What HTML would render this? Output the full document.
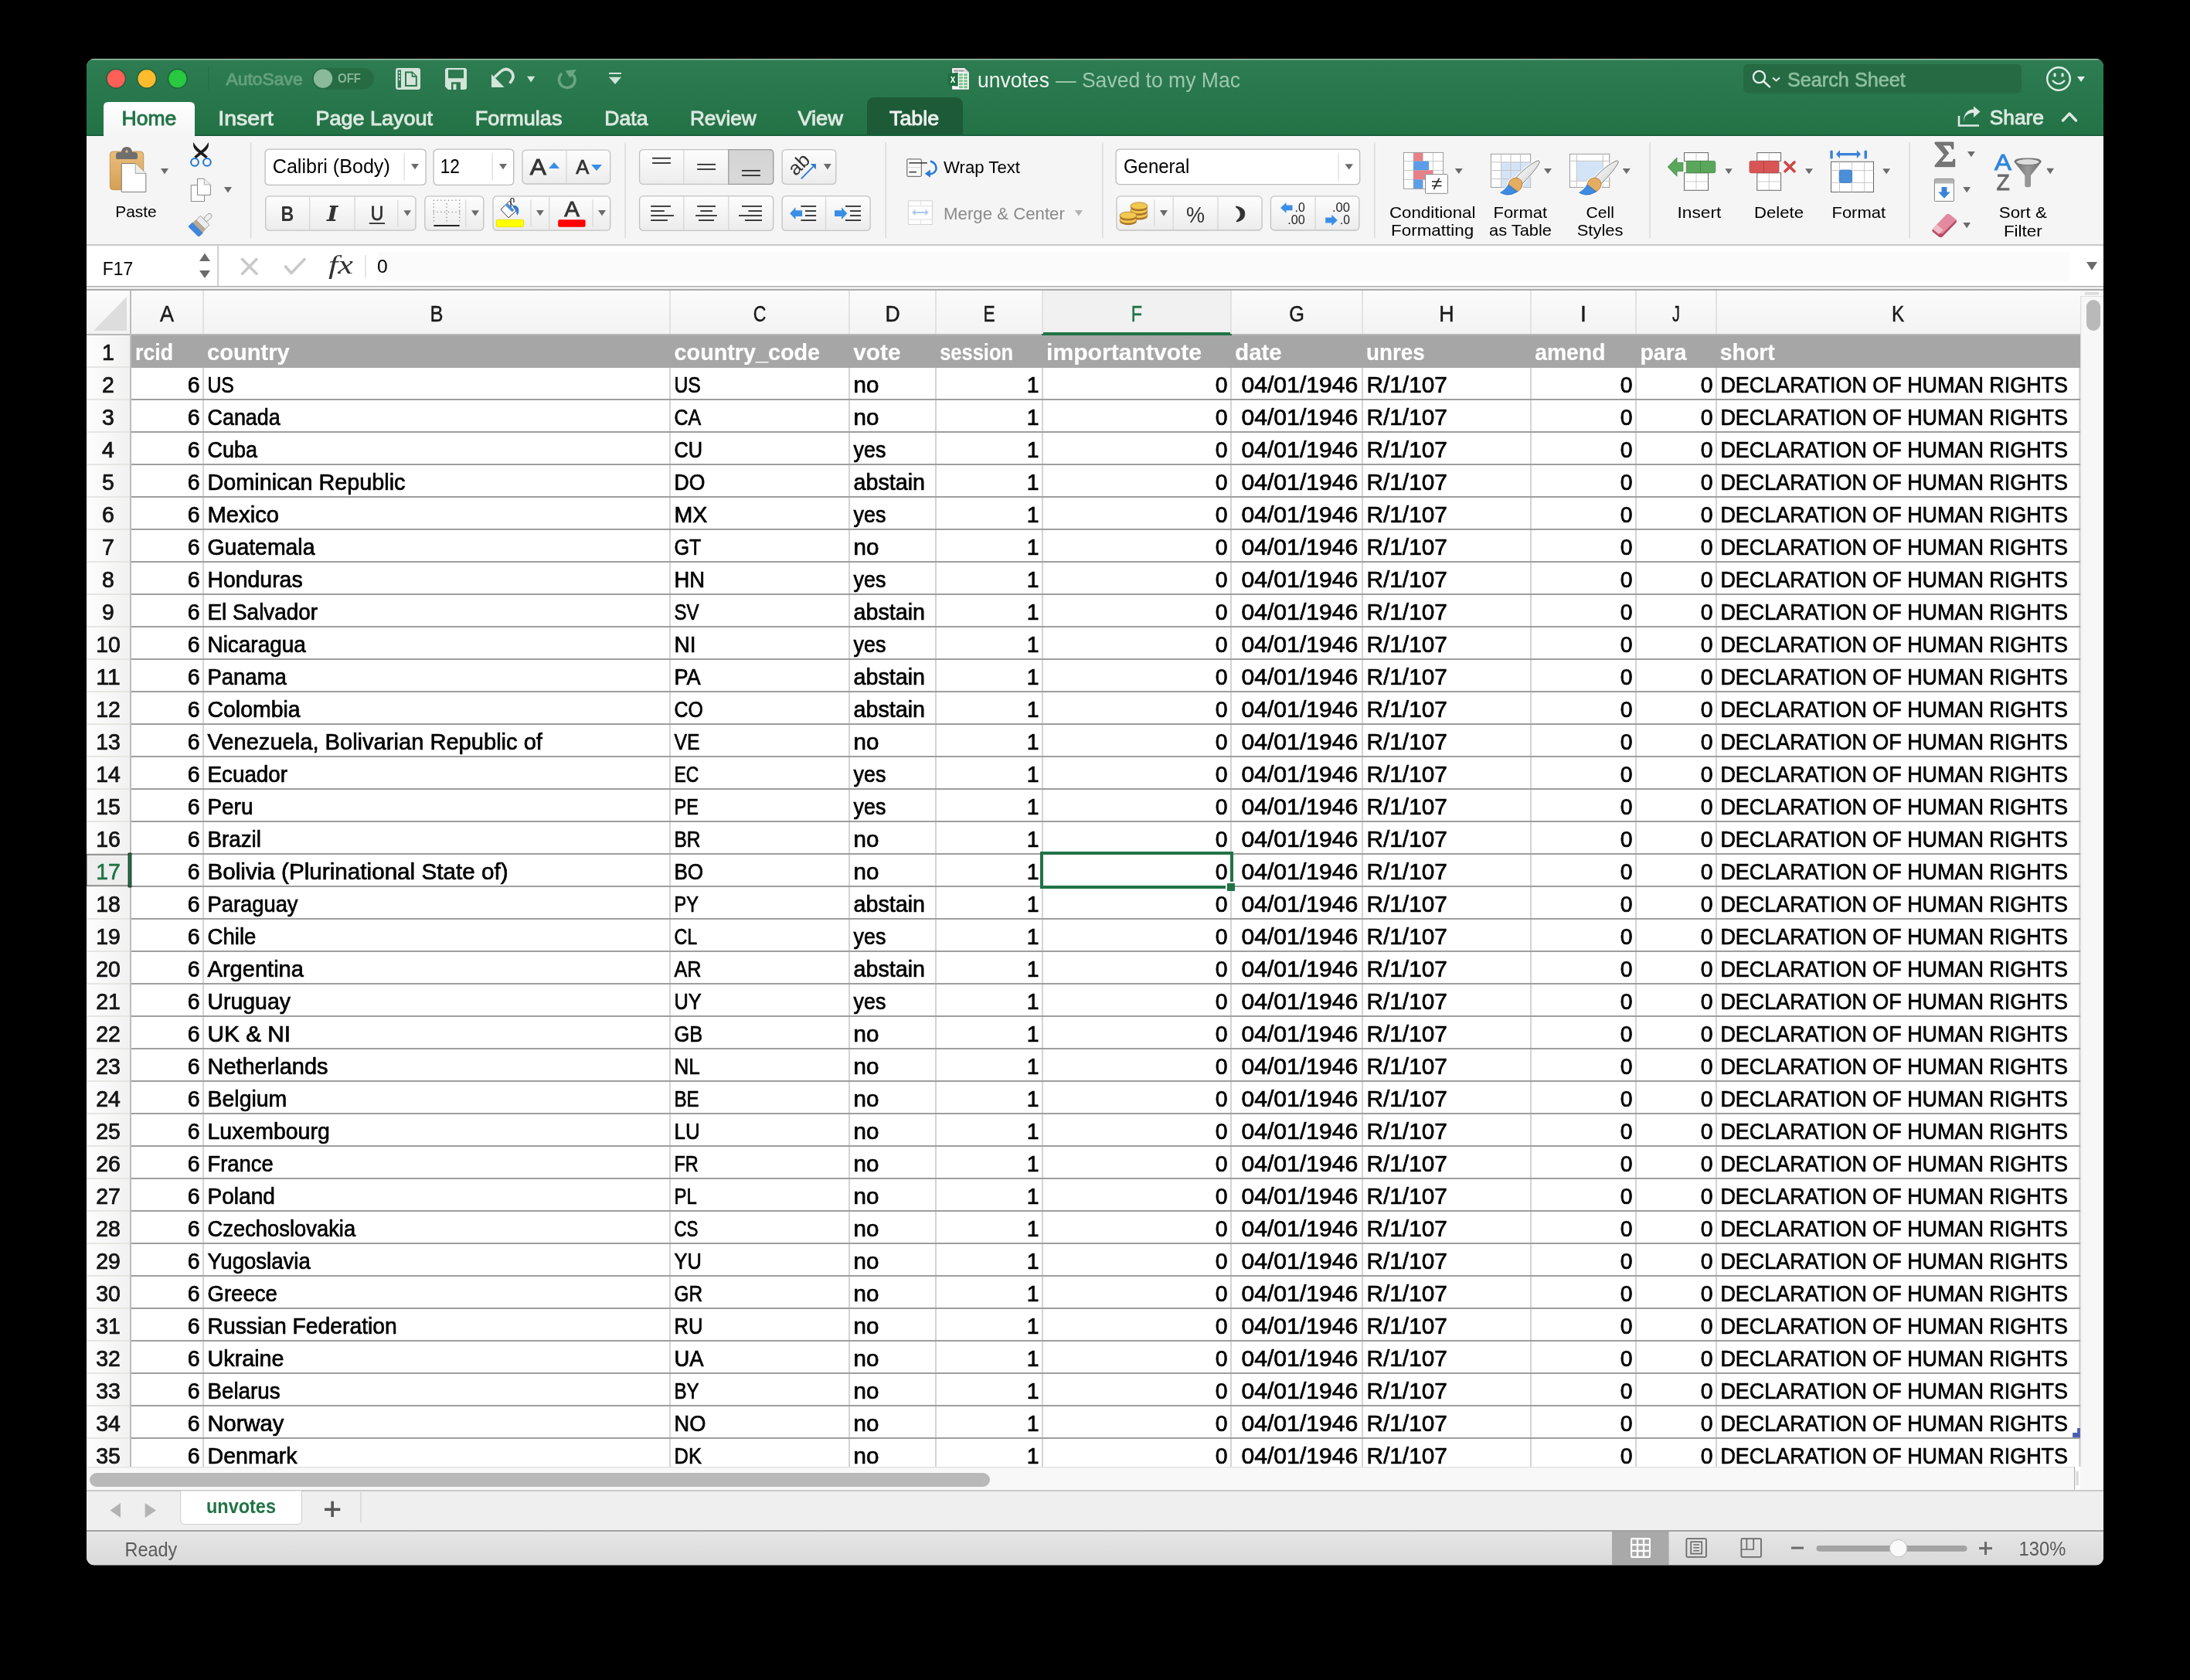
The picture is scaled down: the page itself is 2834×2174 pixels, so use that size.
<!DOCTYPE html>
<html><head><meta charset="utf-8"><style>
html,body{margin:0;padding:0;background:#000;}
body{width:2834px;height:2174px;overflow:hidden;position:relative;}
svg{position:absolute;left:0;top:0;will-change:transform;}
text{font-family:"Liberation Sans",sans-serif;}
</style></head><body>
<svg width="2834" height="2174" viewBox="0 0 2834 2174">
<defs>
<clipPath id="win"><rect x="112" y="76" width="2610" height="1949.5" rx="10" ry="10"/></clipPath>
<linearGradient id="gTitle" x1="0" y1="0" x2="0" y2="1"><stop offset="0" stop-color="#2e7c52"/><stop offset="1" stop-color="#237246"/></linearGradient>
<linearGradient id="gStatus" x1="0" y1="0" x2="0" y2="1"><stop offset="0" stop-color="#e6e6e6"/><stop offset="1" stop-color="#d9d9d9"/></linearGradient>
<linearGradient id="gBtn" x1="0" y1="0" x2="0" y2="1"><stop offset="0" stop-color="#fdfdfd"/><stop offset="1" stop-color="#ececec"/></linearGradient>
<linearGradient id="gBtnSel" x1="0" y1="0" x2="0" y2="1"><stop offset="0" stop-color="#dcdcdc"/><stop offset="1" stop-color="#d0d0d0"/></linearGradient>
<linearGradient id="gColHdr" x1="0" y1="0" x2="0" y2="1"><stop offset="0" stop-color="#fbfbfb"/><stop offset="1" stop-color="#f3f3f3"/></linearGradient>
<linearGradient id="gHome" x1="0" y1="0" x2="0" y2="1"><stop offset="0" stop-color="#ffffff"/><stop offset="1" stop-color="#f5f5f5"/></linearGradient>
<linearGradient id="gRowHdr" x1="0" y1="0" x2="1" y2="0"><stop offset="0" stop-color="#fdfdfd"/><stop offset="1" stop-color="#f1f1f1"/></linearGradient>
</defs>
<g clip-path="url(#win)">
<rect x="112" y="76" width="2610" height="1949.5" fill="#f5f5f5"/>
<rect x="112" y="76" width="2610" height="100" fill="url(#gTitle)"/>
<rect x="112" y="76" width="2610" height="1.5" fill="#9fc2ad"/>
<rect x="112" y="174" width="2610" height="2" fill="#17603a"/>
<rect x="112" y="176" width="2610" height="140" fill="#f5f5f5"/>
<rect x="112" y="316" width="2610" height="2" fill="#c9c9c9"/>
<rect x="112" y="318" width="2610" height="52" fill="#ffffff"/>
<rect x="112" y="370" width="2610" height="1.5" fill="#a9a9a9"/>
<rect x="112" y="371.5" width="2610" height="2.5" fill="#f0f0f0"/>
<rect x="112" y="374" width="2610" height="2" fill="#ababab"/>
<rect x="112" y="376" width="2580" height="56" fill="url(#gColHdr)"/>
<rect x="1350" y="376" width="242" height="56" fill="#f1f1f1"/>
<rect x="112" y="432" width="2580" height="2" fill="#b8b8b8"/>
<rect x="1348" y="430" width="246" height="4" fill="#217346"/>
<rect x="262" y="376" width="2" height="56" fill="#e2e2e2"/>
<rect x="866" y="376" width="2" height="56" fill="#e2e2e2"/>
<rect x="1098" y="376" width="2" height="56" fill="#e2e2e2"/>
<rect x="1210" y="376" width="2" height="56" fill="#e2e2e2"/>
<rect x="1348" y="376" width="2" height="56" fill="#e2e2e2"/>
<rect x="1592" y="376" width="2" height="56" fill="#e2e2e2"/>
<rect x="1762" y="376" width="2" height="56" fill="#e2e2e2"/>
<rect x="1980" y="376" width="2" height="56" fill="#e2e2e2"/>
<rect x="2116" y="376" width="2" height="56" fill="#e2e2e2"/>
<rect x="2220" y="376" width="2" height="56" fill="#e2e2e2"/>
<rect x="168" y="376" width="2" height="58" fill="#bdbdbd"/>
<polygon points="121,428 164,384 164,428" fill="#dddddd"/>
<text x="206.93" y="416.00" font-size="29" fill="#1a1a1a" textLength="18.05" lengthAdjust="spacingAndGlyphs" stroke="#1a1a1a" stroke-width="0.45">A</text>
<text x="556.54" y="416.00" font-size="29" fill="#1a1a1a" textLength="16.97" lengthAdjust="spacingAndGlyphs" stroke="#1a1a1a" stroke-width="0.45">B</text>
<text x="974.71" y="416.00" font-size="29" fill="#1a1a1a" textLength="16.64" lengthAdjust="spacingAndGlyphs" stroke="#1a1a1a" stroke-width="0.45">C</text>
<text x="1145.43" y="416.00" font-size="29" fill="#1a1a1a" textLength="19.20" lengthAdjust="spacingAndGlyphs" stroke="#1a1a1a" stroke-width="0.45">D</text>
<text x="1272.41" y="416.00" font-size="29" fill="#1a1a1a" textLength="15.23" lengthAdjust="spacingAndGlyphs" stroke="#1a1a1a" stroke-width="0.45">E</text>
<text x="1463.84" y="416.00" font-size="29" fill="#217346" textLength="14.34" lengthAdjust="spacingAndGlyphs" stroke="#217346" stroke-width="0.45">F</text>
<text x="1668.13" y="416.00" font-size="29" fill="#1a1a1a" textLength="19.68" lengthAdjust="spacingAndGlyphs" stroke="#1a1a1a" stroke-width="0.45">G</text>
<text x="1862.31" y="416.00" font-size="29" fill="#1a1a1a" textLength="19.44" lengthAdjust="spacingAndGlyphs" stroke="#1a1a1a" stroke-width="0.45">H</text>
<text x="2045.04" y="416.00" font-size="29" fill="#1a1a1a" textLength="7.86" lengthAdjust="spacingAndGlyphs" stroke="#1a1a1a" stroke-width="0.45">I</text>
<text x="2164.03" y="416.00" font-size="29" fill="#1a1a1a" textLength="9.95" lengthAdjust="spacingAndGlyphs" stroke="#1a1a1a" stroke-width="0.45">J</text>
<text x="2447.92" y="416.00" font-size="29" fill="#1a1a1a" textLength="16.21" lengthAdjust="spacingAndGlyphs" stroke="#1a1a1a" stroke-width="0.45">K</text>
<rect x="170" y="434" width="2522" height="1464" fill="#ffffff"/>
<rect x="112" y="434" width="56" height="1464" fill="url(#gRowHdr)"/>
<rect x="168" y="434" width="2" height="1464" fill="#bdbdbd"/>
<rect x="170" y="434" width="2522" height="42" fill="#a6a6a6"/>
<rect x="262" y="476" width="2" height="1422" fill="#d4d4d4"/>
<rect x="866" y="476" width="2" height="1422" fill="#d4d4d4"/>
<rect x="1098" y="476" width="2" height="1422" fill="#d4d4d4"/>
<rect x="1210" y="476" width="2" height="1422" fill="#d4d4d4"/>
<rect x="1348" y="476" width="2" height="1422" fill="#d4d4d4"/>
<rect x="1592" y="476" width="2" height="1422" fill="#d4d4d4"/>
<rect x="1762" y="476" width="2" height="1422" fill="#d4d4d4"/>
<rect x="1980" y="476" width="2" height="1422" fill="#d4d4d4"/>
<rect x="2116" y="476" width="2" height="1422" fill="#d4d4d4"/>
<rect x="2220" y="476" width="2" height="1422" fill="#d4d4d4"/>
<rect x="2690" y="476" width="2" height="1422" fill="#d4d4d4"/>
<rect x="170" y="516" width="2522" height="2" fill="#9e9e9e"/>
<rect x="170" y="558" width="2522" height="2" fill="#9e9e9e"/>
<rect x="170" y="600" width="2522" height="2" fill="#9e9e9e"/>
<rect x="170" y="642" width="2522" height="2" fill="#9e9e9e"/>
<rect x="170" y="684" width="2522" height="2" fill="#9e9e9e"/>
<rect x="170" y="726" width="2522" height="2" fill="#9e9e9e"/>
<rect x="170" y="768" width="2522" height="2" fill="#9e9e9e"/>
<rect x="170" y="810" width="2522" height="2" fill="#9e9e9e"/>
<rect x="170" y="852" width="2522" height="2" fill="#9e9e9e"/>
<rect x="170" y="894" width="2522" height="2" fill="#9e9e9e"/>
<rect x="170" y="936" width="2522" height="2" fill="#9e9e9e"/>
<rect x="170" y="978" width="2522" height="2" fill="#9e9e9e"/>
<rect x="170" y="1020" width="2522" height="2" fill="#9e9e9e"/>
<rect x="170" y="1062" width="2522" height="2" fill="#9e9e9e"/>
<rect x="170" y="1104" width="2522" height="2" fill="#9e9e9e"/>
<rect x="170" y="1146" width="2522" height="2" fill="#9e9e9e"/>
<rect x="170" y="1188" width="2522" height="2" fill="#9e9e9e"/>
<rect x="170" y="1230" width="2522" height="2" fill="#9e9e9e"/>
<rect x="170" y="1272" width="2522" height="2" fill="#9e9e9e"/>
<rect x="170" y="1314" width="2522" height="2" fill="#9e9e9e"/>
<rect x="170" y="1356" width="2522" height="2" fill="#9e9e9e"/>
<rect x="170" y="1398" width="2522" height="2" fill="#9e9e9e"/>
<rect x="170" y="1440" width="2522" height="2" fill="#9e9e9e"/>
<rect x="170" y="1482" width="2522" height="2" fill="#9e9e9e"/>
<rect x="170" y="1524" width="2522" height="2" fill="#9e9e9e"/>
<rect x="170" y="1566" width="2522" height="2" fill="#9e9e9e"/>
<rect x="170" y="1608" width="2522" height="2" fill="#9e9e9e"/>
<rect x="170" y="1650" width="2522" height="2" fill="#9e9e9e"/>
<rect x="170" y="1692" width="2522" height="2" fill="#9e9e9e"/>
<rect x="170" y="1734" width="2522" height="2" fill="#9e9e9e"/>
<rect x="170" y="1776" width="2522" height="2" fill="#9e9e9e"/>
<rect x="170" y="1818" width="2522" height="2" fill="#9e9e9e"/>
<rect x="170" y="1860" width="2522" height="2" fill="#9e9e9e"/>
<rect x="170" y="1902" width="2522" height="2" fill="#9e9e9e"/>
<rect x="112" y="474" width="56" height="2" fill="#e6e5e2"/>
<rect x="112" y="516" width="56" height="2" fill="#e6e5e2"/>
<rect x="112" y="558" width="56" height="2" fill="#e6e5e2"/>
<rect x="112" y="600" width="56" height="2" fill="#e6e5e2"/>
<rect x="112" y="642" width="56" height="2" fill="#e6e5e2"/>
<rect x="112" y="684" width="56" height="2" fill="#e6e5e2"/>
<rect x="112" y="726" width="56" height="2" fill="#e6e5e2"/>
<rect x="112" y="768" width="56" height="2" fill="#e6e5e2"/>
<rect x="112" y="810" width="56" height="2" fill="#e6e5e2"/>
<rect x="112" y="852" width="56" height="2" fill="#e6e5e2"/>
<rect x="112" y="894" width="56" height="2" fill="#e6e5e2"/>
<rect x="112" y="936" width="56" height="2" fill="#e6e5e2"/>
<rect x="112" y="978" width="56" height="2" fill="#e6e5e2"/>
<rect x="112" y="1020" width="56" height="2" fill="#e6e5e2"/>
<rect x="112" y="1062" width="56" height="2" fill="#e6e5e2"/>
<rect x="112" y="1104" width="56" height="2" fill="#e6e5e2"/>
<rect x="112" y="1146" width="56" height="2" fill="#e6e5e2"/>
<rect x="112" y="1188" width="56" height="2" fill="#e6e5e2"/>
<rect x="112" y="1230" width="56" height="2" fill="#e6e5e2"/>
<rect x="112" y="1272" width="56" height="2" fill="#e6e5e2"/>
<rect x="112" y="1314" width="56" height="2" fill="#e6e5e2"/>
<rect x="112" y="1356" width="56" height="2" fill="#e6e5e2"/>
<rect x="112" y="1398" width="56" height="2" fill="#e6e5e2"/>
<rect x="112" y="1440" width="56" height="2" fill="#e6e5e2"/>
<rect x="112" y="1482" width="56" height="2" fill="#e6e5e2"/>
<rect x="112" y="1524" width="56" height="2" fill="#e6e5e2"/>
<rect x="112" y="1566" width="56" height="2" fill="#e6e5e2"/>
<rect x="112" y="1608" width="56" height="2" fill="#e6e5e2"/>
<rect x="112" y="1650" width="56" height="2" fill="#e6e5e2"/>
<rect x="112" y="1692" width="56" height="2" fill="#e6e5e2"/>
<rect x="112" y="1734" width="56" height="2" fill="#e6e5e2"/>
<rect x="112" y="1776" width="56" height="2" fill="#e6e5e2"/>
<rect x="112" y="1818" width="56" height="2" fill="#e6e5e2"/>
<rect x="112" y="1860" width="56" height="2" fill="#e6e5e2"/>
<rect x="112" y="1902" width="56" height="2" fill="#e6e5e2"/>
<g font-family="Liberation Sans" stroke="#000" stroke-width="0.7">
<text x="175.10" y="466.00" font-size="29" font-weight="bold" fill="#ffffff" textLength="48.97" lengthAdjust="spacingAndGlyphs" stroke="#fff" stroke-width="0.2">rcid</text>
<text x="268.00" y="466.00" font-size="29" font-weight="bold" fill="#ffffff" textLength="106.76" lengthAdjust="spacingAndGlyphs" stroke="#fff" stroke-width="0.2">country</text>
<text x="872.60" y="466.00" font-size="29" font-weight="bold" fill="#ffffff" textLength="188.47" lengthAdjust="spacingAndGlyphs" stroke="#fff" stroke-width="0.2">country_code</text>
<text x="1104.30" y="466.00" font-size="29" font-weight="bold" fill="#ffffff" textLength="61.24" lengthAdjust="spacingAndGlyphs" stroke="#fff" stroke-width="0.2">vote</text>
<text x="1216.20" y="466.00" font-size="29" font-weight="bold" fill="#ffffff" textLength="94.78" lengthAdjust="spacingAndGlyphs" stroke="#fff" stroke-width="0.2">session</text>
<text x="1354.00" y="466.00" font-size="29" font-weight="bold" fill="#ffffff" textLength="201.07" lengthAdjust="spacingAndGlyphs" stroke="#fff" stroke-width="0.2">importantvote</text>
<text x="1598.30" y="466.00" font-size="29" font-weight="bold" fill="#ffffff" textLength="60.24" lengthAdjust="spacingAndGlyphs" stroke="#fff" stroke-width="0.2">date</text>
<text x="1768.00" y="466.00" font-size="29" font-weight="bold" fill="#ffffff" textLength="75.65" lengthAdjust="spacingAndGlyphs" stroke="#fff" stroke-width="0.2">unres</text>
<text x="1986.20" y="466.00" font-size="29" font-weight="bold" fill="#ffffff" textLength="91.25" lengthAdjust="spacingAndGlyphs" stroke="#fff" stroke-width="0.2">amend</text>
<text x="2122.50" y="466.00" font-size="29" font-weight="bold" fill="#ffffff" textLength="59.98" lengthAdjust="spacingAndGlyphs" stroke="#fff" stroke-width="0.2">para</text>
<text x="2225.80" y="466.00" font-size="29" font-weight="bold" fill="#ffffff" textLength="70.90" lengthAdjust="spacingAndGlyphs" stroke="#fff" stroke-width="0.2">short</text>
<text x="242.69" y="508" font-size="29" fill="#000" textLength="15.81" lengthAdjust="spacingAndGlyphs">6</text>
<text x="268.50" y="508.00" font-size="29" fill="#000" textLength="34.35" lengthAdjust="spacingAndGlyphs">US</text>
<text x="872.50" y="508.00" font-size="29" fill="#000" textLength="34.35" lengthAdjust="spacingAndGlyphs">US</text>
<text x="1104.50" y="508.00" font-size="29" fill="#000" textLength="32.85" lengthAdjust="spacingAndGlyphs">no</text>
<text x="1328.69" y="508" font-size="29" fill="#000" textLength="15.81" lengthAdjust="spacingAndGlyphs">1</text>
<text x="1572.69" y="508" font-size="29" fill="#000" textLength="15.81" lengthAdjust="spacingAndGlyphs">0</text>
<text x="1606.40" y="508.00" font-size="29" fill="#000" textLength="151.00" lengthAdjust="spacingAndGlyphs">04/01/1946</text>
<text x="1768.50" y="508.00" font-size="29" fill="#000" textLength="104.36" lengthAdjust="spacingAndGlyphs">R/1/107</text>
<text x="2096.69" y="508" font-size="29" fill="#000" textLength="15.81" lengthAdjust="spacingAndGlyphs">0</text>
<text x="2200.69" y="508" font-size="29" fill="#000" textLength="15.81" lengthAdjust="spacingAndGlyphs">0</text>
<text x="2226.40" y="508.00" font-size="29" fill="#000" textLength="449.60" lengthAdjust="spacingAndGlyphs">DECLARATION OF HUMAN RIGHTS</text>
<text x="242.69" y="550" font-size="29" fill="#000" textLength="15.81" lengthAdjust="spacingAndGlyphs">6</text>
<text x="268.50" y="550.00" font-size="29" fill="#000" textLength="94.26" lengthAdjust="spacingAndGlyphs">Canada</text>
<text x="872.50" y="550.00" font-size="29" fill="#000" textLength="34.69" lengthAdjust="spacingAndGlyphs">CA</text>
<text x="1104.50" y="550.00" font-size="29" fill="#000" textLength="32.85" lengthAdjust="spacingAndGlyphs">no</text>
<text x="1328.69" y="550" font-size="29" fill="#000" textLength="15.81" lengthAdjust="spacingAndGlyphs">1</text>
<text x="1572.69" y="550" font-size="29" fill="#000" textLength="15.81" lengthAdjust="spacingAndGlyphs">0</text>
<text x="1606.40" y="550.00" font-size="29" fill="#000" textLength="151.00" lengthAdjust="spacingAndGlyphs">04/01/1946</text>
<text x="1768.50" y="550.00" font-size="29" fill="#000" textLength="104.36" lengthAdjust="spacingAndGlyphs">R/1/107</text>
<text x="2096.69" y="550" font-size="29" fill="#000" textLength="15.81" lengthAdjust="spacingAndGlyphs">0</text>
<text x="2200.69" y="550" font-size="29" fill="#000" textLength="15.81" lengthAdjust="spacingAndGlyphs">0</text>
<text x="2226.40" y="550.00" font-size="29" fill="#000" textLength="449.60" lengthAdjust="spacingAndGlyphs">DECLARATION OF HUMAN RIGHTS</text>
<text x="242.69" y="592" font-size="29" fill="#000" textLength="15.81" lengthAdjust="spacingAndGlyphs">6</text>
<text x="268.50" y="592.00" font-size="29" fill="#000" textLength="64.37" lengthAdjust="spacingAndGlyphs">Cuba</text>
<text x="872.50" y="592.00" font-size="29" fill="#000" textLength="36.65" lengthAdjust="spacingAndGlyphs">CU</text>
<text x="1104.50" y="592.00" font-size="29" fill="#000" textLength="41.85" lengthAdjust="spacingAndGlyphs">yes</text>
<text x="1328.69" y="592" font-size="29" fill="#000" textLength="15.81" lengthAdjust="spacingAndGlyphs">1</text>
<text x="1572.69" y="592" font-size="29" fill="#000" textLength="15.81" lengthAdjust="spacingAndGlyphs">0</text>
<text x="1606.40" y="592.00" font-size="29" fill="#000" textLength="151.00" lengthAdjust="spacingAndGlyphs">04/01/1946</text>
<text x="1768.50" y="592.00" font-size="29" fill="#000" textLength="104.36" lengthAdjust="spacingAndGlyphs">R/1/107</text>
<text x="2096.69" y="592" font-size="29" fill="#000" textLength="15.81" lengthAdjust="spacingAndGlyphs">0</text>
<text x="2200.69" y="592" font-size="29" fill="#000" textLength="15.81" lengthAdjust="spacingAndGlyphs">0</text>
<text x="2226.40" y="592.00" font-size="29" fill="#000" textLength="449.60" lengthAdjust="spacingAndGlyphs">DECLARATION OF HUMAN RIGHTS</text>
<text x="242.69" y="634" font-size="29" fill="#000" textLength="15.81" lengthAdjust="spacingAndGlyphs">6</text>
<text x="268.50" y="634.00" font-size="29" fill="#000" textLength="255.94" lengthAdjust="spacingAndGlyphs">Dominican Republic</text>
<text x="872.50" y="634.00" font-size="29" fill="#000" textLength="39.85" lengthAdjust="spacingAndGlyphs">DO</text>
<text x="1104.50" y="634.00" font-size="29" fill="#000" textLength="92.49" lengthAdjust="spacingAndGlyphs">abstain</text>
<text x="1328.69" y="634" font-size="29" fill="#000" textLength="15.81" lengthAdjust="spacingAndGlyphs">1</text>
<text x="1572.69" y="634" font-size="29" fill="#000" textLength="15.81" lengthAdjust="spacingAndGlyphs">0</text>
<text x="1606.40" y="634.00" font-size="29" fill="#000" textLength="151.00" lengthAdjust="spacingAndGlyphs">04/01/1946</text>
<text x="1768.50" y="634.00" font-size="29" fill="#000" textLength="104.36" lengthAdjust="spacingAndGlyphs">R/1/107</text>
<text x="2096.69" y="634" font-size="29" fill="#000" textLength="15.81" lengthAdjust="spacingAndGlyphs">0</text>
<text x="2200.69" y="634" font-size="29" fill="#000" textLength="15.81" lengthAdjust="spacingAndGlyphs">0</text>
<text x="2226.40" y="634.00" font-size="29" fill="#000" textLength="449.60" lengthAdjust="spacingAndGlyphs">DECLARATION OF HUMAN RIGHTS</text>
<text x="242.69" y="676" font-size="29" fill="#000" textLength="15.81" lengthAdjust="spacingAndGlyphs">6</text>
<text x="268.50" y="676.00" font-size="29" fill="#000" textLength="92.52" lengthAdjust="spacingAndGlyphs">Mexico</text>
<text x="872.50" y="676.00" font-size="29" fill="#000" textLength="42.87" lengthAdjust="spacingAndGlyphs">MX</text>
<text x="1104.50" y="676.00" font-size="29" fill="#000" textLength="41.85" lengthAdjust="spacingAndGlyphs">yes</text>
<text x="1328.69" y="676" font-size="29" fill="#000" textLength="15.81" lengthAdjust="spacingAndGlyphs">1</text>
<text x="1572.69" y="676" font-size="29" fill="#000" textLength="15.81" lengthAdjust="spacingAndGlyphs">0</text>
<text x="1606.40" y="676.00" font-size="29" fill="#000" textLength="151.00" lengthAdjust="spacingAndGlyphs">04/01/1946</text>
<text x="1768.50" y="676.00" font-size="29" fill="#000" textLength="104.36" lengthAdjust="spacingAndGlyphs">R/1/107</text>
<text x="2096.69" y="676" font-size="29" fill="#000" textLength="15.81" lengthAdjust="spacingAndGlyphs">0</text>
<text x="2200.69" y="676" font-size="29" fill="#000" textLength="15.81" lengthAdjust="spacingAndGlyphs">0</text>
<text x="2226.40" y="676.00" font-size="29" fill="#000" textLength="449.60" lengthAdjust="spacingAndGlyphs">DECLARATION OF HUMAN RIGHTS</text>
<text x="242.69" y="718" font-size="29" fill="#000" textLength="15.81" lengthAdjust="spacingAndGlyphs">6</text>
<text x="268.50" y="718.00" font-size="29" fill="#000" textLength="138.97" lengthAdjust="spacingAndGlyphs">Guatemala</text>
<text x="872.50" y="718.00" font-size="29" fill="#000" textLength="34.89" lengthAdjust="spacingAndGlyphs">GT</text>
<text x="1104.50" y="718.00" font-size="29" fill="#000" textLength="32.85" lengthAdjust="spacingAndGlyphs">no</text>
<text x="1328.69" y="718" font-size="29" fill="#000" textLength="15.81" lengthAdjust="spacingAndGlyphs">1</text>
<text x="1572.69" y="718" font-size="29" fill="#000" textLength="15.81" lengthAdjust="spacingAndGlyphs">0</text>
<text x="1606.40" y="718.00" font-size="29" fill="#000" textLength="151.00" lengthAdjust="spacingAndGlyphs">04/01/1946</text>
<text x="1768.50" y="718.00" font-size="29" fill="#000" textLength="104.36" lengthAdjust="spacingAndGlyphs">R/1/107</text>
<text x="2096.69" y="718" font-size="29" fill="#000" textLength="15.81" lengthAdjust="spacingAndGlyphs">0</text>
<text x="2200.69" y="718" font-size="29" fill="#000" textLength="15.81" lengthAdjust="spacingAndGlyphs">0</text>
<text x="2226.40" y="718.00" font-size="29" fill="#000" textLength="449.60" lengthAdjust="spacingAndGlyphs">DECLARATION OF HUMAN RIGHTS</text>
<text x="242.69" y="760" font-size="29" fill="#000" textLength="15.81" lengthAdjust="spacingAndGlyphs">6</text>
<text x="268.50" y="760.00" font-size="29" fill="#000" textLength="123.09" lengthAdjust="spacingAndGlyphs">Honduras</text>
<text x="872.50" y="760.00" font-size="29" fill="#000" textLength="39.58" lengthAdjust="spacingAndGlyphs">HN</text>
<text x="1104.50" y="760.00" font-size="29" fill="#000" textLength="41.85" lengthAdjust="spacingAndGlyphs">yes</text>
<text x="1328.69" y="760" font-size="29" fill="#000" textLength="15.81" lengthAdjust="spacingAndGlyphs">1</text>
<text x="1572.69" y="760" font-size="29" fill="#000" textLength="15.81" lengthAdjust="spacingAndGlyphs">0</text>
<text x="1606.40" y="760.00" font-size="29" fill="#000" textLength="151.00" lengthAdjust="spacingAndGlyphs">04/01/1946</text>
<text x="1768.50" y="760.00" font-size="29" fill="#000" textLength="104.36" lengthAdjust="spacingAndGlyphs">R/1/107</text>
<text x="2096.69" y="760" font-size="29" fill="#000" textLength="15.81" lengthAdjust="spacingAndGlyphs">0</text>
<text x="2200.69" y="760" font-size="29" fill="#000" textLength="15.81" lengthAdjust="spacingAndGlyphs">0</text>
<text x="2226.40" y="760.00" font-size="29" fill="#000" textLength="449.60" lengthAdjust="spacingAndGlyphs">DECLARATION OF HUMAN RIGHTS</text>
<text x="242.69" y="802" font-size="29" fill="#000" textLength="15.81" lengthAdjust="spacingAndGlyphs">6</text>
<text x="268.50" y="802.00" font-size="29" fill="#000" textLength="142.56" lengthAdjust="spacingAndGlyphs">El Salvador</text>
<text x="872.50" y="802.00" font-size="29" fill="#000" textLength="32.04" lengthAdjust="spacingAndGlyphs">SV</text>
<text x="1104.50" y="802.00" font-size="29" fill="#000" textLength="92.49" lengthAdjust="spacingAndGlyphs">abstain</text>
<text x="1328.69" y="802" font-size="29" fill="#000" textLength="15.81" lengthAdjust="spacingAndGlyphs">1</text>
<text x="1572.69" y="802" font-size="29" fill="#000" textLength="15.81" lengthAdjust="spacingAndGlyphs">0</text>
<text x="1606.40" y="802.00" font-size="29" fill="#000" textLength="151.00" lengthAdjust="spacingAndGlyphs">04/01/1946</text>
<text x="1768.50" y="802.00" font-size="29" fill="#000" textLength="104.36" lengthAdjust="spacingAndGlyphs">R/1/107</text>
<text x="2096.69" y="802" font-size="29" fill="#000" textLength="15.81" lengthAdjust="spacingAndGlyphs">0</text>
<text x="2200.69" y="802" font-size="29" fill="#000" textLength="15.81" lengthAdjust="spacingAndGlyphs">0</text>
<text x="2226.40" y="802.00" font-size="29" fill="#000" textLength="449.60" lengthAdjust="spacingAndGlyphs">DECLARATION OF HUMAN RIGHTS</text>
<text x="242.69" y="844" font-size="29" fill="#000" textLength="15.81" lengthAdjust="spacingAndGlyphs">6</text>
<text x="268.50" y="844.00" font-size="29" fill="#000" textLength="127.28" lengthAdjust="spacingAndGlyphs">Nicaragua</text>
<text x="872.50" y="844.00" font-size="29" fill="#000" textLength="28.00" lengthAdjust="spacingAndGlyphs">NI</text>
<text x="1104.50" y="844.00" font-size="29" fill="#000" textLength="41.85" lengthAdjust="spacingAndGlyphs">yes</text>
<text x="1328.69" y="844" font-size="29" fill="#000" textLength="15.81" lengthAdjust="spacingAndGlyphs">1</text>
<text x="1572.69" y="844" font-size="29" fill="#000" textLength="15.81" lengthAdjust="spacingAndGlyphs">0</text>
<text x="1606.40" y="844.00" font-size="29" fill="#000" textLength="151.00" lengthAdjust="spacingAndGlyphs">04/01/1946</text>
<text x="1768.50" y="844.00" font-size="29" fill="#000" textLength="104.36" lengthAdjust="spacingAndGlyphs">R/1/107</text>
<text x="2096.69" y="844" font-size="29" fill="#000" textLength="15.81" lengthAdjust="spacingAndGlyphs">0</text>
<text x="2200.69" y="844" font-size="29" fill="#000" textLength="15.81" lengthAdjust="spacingAndGlyphs">0</text>
<text x="2226.40" y="844.00" font-size="29" fill="#000" textLength="449.60" lengthAdjust="spacingAndGlyphs">DECLARATION OF HUMAN RIGHTS</text>
<text x="242.69" y="886" font-size="29" fill="#000" textLength="15.81" lengthAdjust="spacingAndGlyphs">6</text>
<text x="268.50" y="886.00" font-size="29" fill="#000" textLength="102.27" lengthAdjust="spacingAndGlyphs">Panama</text>
<text x="872.50" y="886.00" font-size="29" fill="#000" textLength="34.17" lengthAdjust="spacingAndGlyphs">PA</text>
<text x="1104.50" y="886.00" font-size="29" fill="#000" textLength="92.49" lengthAdjust="spacingAndGlyphs">abstain</text>
<text x="1328.69" y="886" font-size="29" fill="#000" textLength="15.81" lengthAdjust="spacingAndGlyphs">1</text>
<text x="1572.69" y="886" font-size="29" fill="#000" textLength="15.81" lengthAdjust="spacingAndGlyphs">0</text>
<text x="1606.40" y="886.00" font-size="29" fill="#000" textLength="151.00" lengthAdjust="spacingAndGlyphs">04/01/1946</text>
<text x="1768.50" y="886.00" font-size="29" fill="#000" textLength="104.36" lengthAdjust="spacingAndGlyphs">R/1/107</text>
<text x="2096.69" y="886" font-size="29" fill="#000" textLength="15.81" lengthAdjust="spacingAndGlyphs">0</text>
<text x="2200.69" y="886" font-size="29" fill="#000" textLength="15.81" lengthAdjust="spacingAndGlyphs">0</text>
<text x="2226.40" y="886.00" font-size="29" fill="#000" textLength="449.60" lengthAdjust="spacingAndGlyphs">DECLARATION OF HUMAN RIGHTS</text>
<text x="242.69" y="928" font-size="29" fill="#000" textLength="15.81" lengthAdjust="spacingAndGlyphs">6</text>
<text x="268.50" y="928.00" font-size="29" fill="#000" textLength="120.12" lengthAdjust="spacingAndGlyphs">Colombia</text>
<text x="872.50" y="928.00" font-size="29" fill="#000" textLength="37.29" lengthAdjust="spacingAndGlyphs">CO</text>
<text x="1104.50" y="928.00" font-size="29" fill="#000" textLength="92.49" lengthAdjust="spacingAndGlyphs">abstain</text>
<text x="1328.69" y="928" font-size="29" fill="#000" textLength="15.81" lengthAdjust="spacingAndGlyphs">1</text>
<text x="1572.69" y="928" font-size="29" fill="#000" textLength="15.81" lengthAdjust="spacingAndGlyphs">0</text>
<text x="1606.40" y="928.00" font-size="29" fill="#000" textLength="151.00" lengthAdjust="spacingAndGlyphs">04/01/1946</text>
<text x="1768.50" y="928.00" font-size="29" fill="#000" textLength="104.36" lengthAdjust="spacingAndGlyphs">R/1/107</text>
<text x="2096.69" y="928" font-size="29" fill="#000" textLength="15.81" lengthAdjust="spacingAndGlyphs">0</text>
<text x="2200.69" y="928" font-size="29" fill="#000" textLength="15.81" lengthAdjust="spacingAndGlyphs">0</text>
<text x="2226.40" y="928.00" font-size="29" fill="#000" textLength="449.60" lengthAdjust="spacingAndGlyphs">DECLARATION OF HUMAN RIGHTS</text>
<text x="242.69" y="970" font-size="29" fill="#000" textLength="15.81" lengthAdjust="spacingAndGlyphs">6</text>
<text x="268.50" y="970.00" font-size="29" fill="#000" textLength="433.46" lengthAdjust="spacingAndGlyphs">Venezuela, Bolivarian Republic of</text>
<text x="872.50" y="970.00" font-size="29" fill="#000" textLength="32.94" lengthAdjust="spacingAndGlyphs">VE</text>
<text x="1104.50" y="970.00" font-size="29" fill="#000" textLength="32.85" lengthAdjust="spacingAndGlyphs">no</text>
<text x="1328.69" y="970" font-size="29" fill="#000" textLength="15.81" lengthAdjust="spacingAndGlyphs">1</text>
<text x="1572.69" y="970" font-size="29" fill="#000" textLength="15.81" lengthAdjust="spacingAndGlyphs">0</text>
<text x="1606.40" y="970.00" font-size="29" fill="#000" textLength="151.00" lengthAdjust="spacingAndGlyphs">04/01/1946</text>
<text x="1768.50" y="970.00" font-size="29" fill="#000" textLength="104.36" lengthAdjust="spacingAndGlyphs">R/1/107</text>
<text x="2096.69" y="970" font-size="29" fill="#000" textLength="15.81" lengthAdjust="spacingAndGlyphs">0</text>
<text x="2200.69" y="970" font-size="29" fill="#000" textLength="15.81" lengthAdjust="spacingAndGlyphs">0</text>
<text x="2226.40" y="970.00" font-size="29" fill="#000" textLength="449.60" lengthAdjust="spacingAndGlyphs">DECLARATION OF HUMAN RIGHTS</text>
<text x="242.69" y="1012" font-size="29" fill="#000" textLength="15.81" lengthAdjust="spacingAndGlyphs">6</text>
<text x="268.50" y="1012.00" font-size="29" fill="#000" textLength="103.49" lengthAdjust="spacingAndGlyphs">Ecuador</text>
<text x="872.50" y="1012.00" font-size="29" fill="#000" textLength="31.87" lengthAdjust="spacingAndGlyphs">EC</text>
<text x="1104.50" y="1012.00" font-size="29" fill="#000" textLength="41.85" lengthAdjust="spacingAndGlyphs">yes</text>
<text x="1328.69" y="1012" font-size="29" fill="#000" textLength="15.81" lengthAdjust="spacingAndGlyphs">1</text>
<text x="1572.69" y="1012" font-size="29" fill="#000" textLength="15.81" lengthAdjust="spacingAndGlyphs">0</text>
<text x="1606.40" y="1012.00" font-size="29" fill="#000" textLength="151.00" lengthAdjust="spacingAndGlyphs">04/01/1946</text>
<text x="1768.50" y="1012.00" font-size="29" fill="#000" textLength="104.36" lengthAdjust="spacingAndGlyphs">R/1/107</text>
<text x="2096.69" y="1012" font-size="29" fill="#000" textLength="15.81" lengthAdjust="spacingAndGlyphs">0</text>
<text x="2200.69" y="1012" font-size="29" fill="#000" textLength="15.81" lengthAdjust="spacingAndGlyphs">0</text>
<text x="2226.40" y="1012.00" font-size="29" fill="#000" textLength="449.60" lengthAdjust="spacingAndGlyphs">DECLARATION OF HUMAN RIGHTS</text>
<text x="242.69" y="1054" font-size="29" fill="#000" textLength="15.81" lengthAdjust="spacingAndGlyphs">6</text>
<text x="268.50" y="1054.00" font-size="29" fill="#000" textLength="58.91" lengthAdjust="spacingAndGlyphs">Peru</text>
<text x="872.50" y="1054.00" font-size="29" fill="#000" textLength="31.35" lengthAdjust="spacingAndGlyphs">PE</text>
<text x="1104.50" y="1054.00" font-size="29" fill="#000" textLength="41.85" lengthAdjust="spacingAndGlyphs">yes</text>
<text x="1328.69" y="1054" font-size="29" fill="#000" textLength="15.81" lengthAdjust="spacingAndGlyphs">1</text>
<text x="1572.69" y="1054" font-size="29" fill="#000" textLength="15.81" lengthAdjust="spacingAndGlyphs">0</text>
<text x="1606.40" y="1054.00" font-size="29" fill="#000" textLength="151.00" lengthAdjust="spacingAndGlyphs">04/01/1946</text>
<text x="1768.50" y="1054.00" font-size="29" fill="#000" textLength="104.36" lengthAdjust="spacingAndGlyphs">R/1/107</text>
<text x="2096.69" y="1054" font-size="29" fill="#000" textLength="15.81" lengthAdjust="spacingAndGlyphs">0</text>
<text x="2200.69" y="1054" font-size="29" fill="#000" textLength="15.81" lengthAdjust="spacingAndGlyphs">0</text>
<text x="2226.40" y="1054.00" font-size="29" fill="#000" textLength="449.60" lengthAdjust="spacingAndGlyphs">DECLARATION OF HUMAN RIGHTS</text>
<text x="242.69" y="1096" font-size="29" fill="#000" textLength="15.81" lengthAdjust="spacingAndGlyphs">6</text>
<text x="268.50" y="1096.00" font-size="29" fill="#000" textLength="69.44" lengthAdjust="spacingAndGlyphs">Brazil</text>
<text x="872.50" y="1096.00" font-size="29" fill="#000" textLength="33.91" lengthAdjust="spacingAndGlyphs">BR</text>
<text x="1104.50" y="1096.00" font-size="29" fill="#000" textLength="32.85" lengthAdjust="spacingAndGlyphs">no</text>
<text x="1328.69" y="1096" font-size="29" fill="#000" textLength="15.81" lengthAdjust="spacingAndGlyphs">1</text>
<text x="1572.69" y="1096" font-size="29" fill="#000" textLength="15.81" lengthAdjust="spacingAndGlyphs">0</text>
<text x="1606.40" y="1096.00" font-size="29" fill="#000" textLength="151.00" lengthAdjust="spacingAndGlyphs">04/01/1946</text>
<text x="1768.50" y="1096.00" font-size="29" fill="#000" textLength="104.36" lengthAdjust="spacingAndGlyphs">R/1/107</text>
<text x="2096.69" y="1096" font-size="29" fill="#000" textLength="15.81" lengthAdjust="spacingAndGlyphs">0</text>
<text x="2200.69" y="1096" font-size="29" fill="#000" textLength="15.81" lengthAdjust="spacingAndGlyphs">0</text>
<text x="2226.40" y="1096.00" font-size="29" fill="#000" textLength="449.60" lengthAdjust="spacingAndGlyphs">DECLARATION OF HUMAN RIGHTS</text>
<text x="242.69" y="1138" font-size="29" fill="#000" textLength="15.81" lengthAdjust="spacingAndGlyphs">6</text>
<text x="268.50" y="1138.00" font-size="29" fill="#000" textLength="389.06" lengthAdjust="spacingAndGlyphs">Bolivia (Plurinational State of)</text>
<text x="872.50" y="1138.00" font-size="29" fill="#000" textLength="37.63" lengthAdjust="spacingAndGlyphs">BO</text>
<text x="1104.50" y="1138.00" font-size="29" fill="#000" textLength="32.85" lengthAdjust="spacingAndGlyphs">no</text>
<text x="1328.69" y="1138" font-size="29" fill="#000" textLength="15.81" lengthAdjust="spacingAndGlyphs">1</text>
<text x="1572.69" y="1138" font-size="29" fill="#000" textLength="15.81" lengthAdjust="spacingAndGlyphs">0</text>
<text x="1606.40" y="1138.00" font-size="29" fill="#000" textLength="151.00" lengthAdjust="spacingAndGlyphs">04/01/1946</text>
<text x="1768.50" y="1138.00" font-size="29" fill="#000" textLength="104.36" lengthAdjust="spacingAndGlyphs">R/1/107</text>
<text x="2096.69" y="1138" font-size="29" fill="#000" textLength="15.81" lengthAdjust="spacingAndGlyphs">0</text>
<text x="2200.69" y="1138" font-size="29" fill="#000" textLength="15.81" lengthAdjust="spacingAndGlyphs">0</text>
<text x="2226.40" y="1138.00" font-size="29" fill="#000" textLength="449.60" lengthAdjust="spacingAndGlyphs">DECLARATION OF HUMAN RIGHTS</text>
<text x="242.69" y="1180" font-size="29" fill="#000" textLength="15.81" lengthAdjust="spacingAndGlyphs">6</text>
<text x="268.50" y="1180.00" font-size="29" fill="#000" textLength="117.03" lengthAdjust="spacingAndGlyphs">Paraguay</text>
<text x="872.50" y="1180.00" font-size="29" fill="#000" textLength="31.32" lengthAdjust="spacingAndGlyphs">PY</text>
<text x="1104.50" y="1180.00" font-size="29" fill="#000" textLength="92.49" lengthAdjust="spacingAndGlyphs">abstain</text>
<text x="1328.69" y="1180" font-size="29" fill="#000" textLength="15.81" lengthAdjust="spacingAndGlyphs">1</text>
<text x="1572.69" y="1180" font-size="29" fill="#000" textLength="15.81" lengthAdjust="spacingAndGlyphs">0</text>
<text x="1606.40" y="1180.00" font-size="29" fill="#000" textLength="151.00" lengthAdjust="spacingAndGlyphs">04/01/1946</text>
<text x="1768.50" y="1180.00" font-size="29" fill="#000" textLength="104.36" lengthAdjust="spacingAndGlyphs">R/1/107</text>
<text x="2096.69" y="1180" font-size="29" fill="#000" textLength="15.81" lengthAdjust="spacingAndGlyphs">0</text>
<text x="2200.69" y="1180" font-size="29" fill="#000" textLength="15.81" lengthAdjust="spacingAndGlyphs">0</text>
<text x="2226.40" y="1180.00" font-size="29" fill="#000" textLength="449.60" lengthAdjust="spacingAndGlyphs">DECLARATION OF HUMAN RIGHTS</text>
<text x="242.69" y="1222" font-size="29" fill="#000" textLength="15.81" lengthAdjust="spacingAndGlyphs">6</text>
<text x="268.50" y="1222.00" font-size="29" fill="#000" textLength="62.87" lengthAdjust="spacingAndGlyphs">Chile</text>
<text x="872.50" y="1222.00" font-size="29" fill="#000" textLength="29.75" lengthAdjust="spacingAndGlyphs">CL</text>
<text x="1104.50" y="1222.00" font-size="29" fill="#000" textLength="41.85" lengthAdjust="spacingAndGlyphs">yes</text>
<text x="1328.69" y="1222" font-size="29" fill="#000" textLength="15.81" lengthAdjust="spacingAndGlyphs">1</text>
<text x="1572.69" y="1222" font-size="29" fill="#000" textLength="15.81" lengthAdjust="spacingAndGlyphs">0</text>
<text x="1606.40" y="1222.00" font-size="29" fill="#000" textLength="151.00" lengthAdjust="spacingAndGlyphs">04/01/1946</text>
<text x="1768.50" y="1222.00" font-size="29" fill="#000" textLength="104.36" lengthAdjust="spacingAndGlyphs">R/1/107</text>
<text x="2096.69" y="1222" font-size="29" fill="#000" textLength="15.81" lengthAdjust="spacingAndGlyphs">0</text>
<text x="2200.69" y="1222" font-size="29" fill="#000" textLength="15.81" lengthAdjust="spacingAndGlyphs">0</text>
<text x="2226.40" y="1222.00" font-size="29" fill="#000" textLength="449.60" lengthAdjust="spacingAndGlyphs">DECLARATION OF HUMAN RIGHTS</text>
<text x="242.69" y="1264" font-size="29" fill="#000" textLength="15.81" lengthAdjust="spacingAndGlyphs">6</text>
<text x="268.50" y="1264.00" font-size="29" fill="#000" textLength="124.48" lengthAdjust="spacingAndGlyphs">Argentina</text>
<text x="872.50" y="1264.00" font-size="29" fill="#000" textLength="34.99" lengthAdjust="spacingAndGlyphs">AR</text>
<text x="1104.50" y="1264.00" font-size="29" fill="#000" textLength="92.49" lengthAdjust="spacingAndGlyphs">abstain</text>
<text x="1328.69" y="1264" font-size="29" fill="#000" textLength="15.81" lengthAdjust="spacingAndGlyphs">1</text>
<text x="1572.69" y="1264" font-size="29" fill="#000" textLength="15.81" lengthAdjust="spacingAndGlyphs">0</text>
<text x="1606.40" y="1264.00" font-size="29" fill="#000" textLength="151.00" lengthAdjust="spacingAndGlyphs">04/01/1946</text>
<text x="1768.50" y="1264.00" font-size="29" fill="#000" textLength="104.36" lengthAdjust="spacingAndGlyphs">R/1/107</text>
<text x="2096.69" y="1264" font-size="29" fill="#000" textLength="15.81" lengthAdjust="spacingAndGlyphs">0</text>
<text x="2200.69" y="1264" font-size="29" fill="#000" textLength="15.81" lengthAdjust="spacingAndGlyphs">0</text>
<text x="2226.40" y="1264.00" font-size="29" fill="#000" textLength="449.60" lengthAdjust="spacingAndGlyphs">DECLARATION OF HUMAN RIGHTS</text>
<text x="242.69" y="1306" font-size="29" fill="#000" textLength="15.81" lengthAdjust="spacingAndGlyphs">6</text>
<text x="268.50" y="1306.00" font-size="29" fill="#000" textLength="107.43" lengthAdjust="spacingAndGlyphs">Uruguay</text>
<text x="872.50" y="1306.00" font-size="29" fill="#000" textLength="35.22" lengthAdjust="spacingAndGlyphs">UY</text>
<text x="1104.50" y="1306.00" font-size="29" fill="#000" textLength="41.85" lengthAdjust="spacingAndGlyphs">yes</text>
<text x="1328.69" y="1306" font-size="29" fill="#000" textLength="15.81" lengthAdjust="spacingAndGlyphs">1</text>
<text x="1572.69" y="1306" font-size="29" fill="#000" textLength="15.81" lengthAdjust="spacingAndGlyphs">0</text>
<text x="1606.40" y="1306.00" font-size="29" fill="#000" textLength="151.00" lengthAdjust="spacingAndGlyphs">04/01/1946</text>
<text x="1768.50" y="1306.00" font-size="29" fill="#000" textLength="104.36" lengthAdjust="spacingAndGlyphs">R/1/107</text>
<text x="2096.69" y="1306" font-size="29" fill="#000" textLength="15.81" lengthAdjust="spacingAndGlyphs">0</text>
<text x="2200.69" y="1306" font-size="29" fill="#000" textLength="15.81" lengthAdjust="spacingAndGlyphs">0</text>
<text x="2226.40" y="1306.00" font-size="29" fill="#000" textLength="449.60" lengthAdjust="spacingAndGlyphs">DECLARATION OF HUMAN RIGHTS</text>
<text x="242.69" y="1348" font-size="29" fill="#000" textLength="15.81" lengthAdjust="spacingAndGlyphs">6</text>
<text x="268.50" y="1348.00" font-size="29" fill="#000" textLength="107.57" lengthAdjust="spacingAndGlyphs">UK &amp; NI</text>
<text x="872.50" y="1348.00" font-size="29" fill="#000" textLength="36.65" lengthAdjust="spacingAndGlyphs">GB</text>
<text x="1104.50" y="1348.00" font-size="29" fill="#000" textLength="32.85" lengthAdjust="spacingAndGlyphs">no</text>
<text x="1328.69" y="1348" font-size="29" fill="#000" textLength="15.81" lengthAdjust="spacingAndGlyphs">1</text>
<text x="1572.69" y="1348" font-size="29" fill="#000" textLength="15.81" lengthAdjust="spacingAndGlyphs">0</text>
<text x="1606.40" y="1348.00" font-size="29" fill="#000" textLength="151.00" lengthAdjust="spacingAndGlyphs">04/01/1946</text>
<text x="1768.50" y="1348.00" font-size="29" fill="#000" textLength="104.36" lengthAdjust="spacingAndGlyphs">R/1/107</text>
<text x="2096.69" y="1348" font-size="29" fill="#000" textLength="15.81" lengthAdjust="spacingAndGlyphs">0</text>
<text x="2200.69" y="1348" font-size="29" fill="#000" textLength="15.81" lengthAdjust="spacingAndGlyphs">0</text>
<text x="2226.40" y="1348.00" font-size="29" fill="#000" textLength="449.60" lengthAdjust="spacingAndGlyphs">DECLARATION OF HUMAN RIGHTS</text>
<text x="242.69" y="1390" font-size="29" fill="#000" textLength="15.81" lengthAdjust="spacingAndGlyphs">6</text>
<text x="268.50" y="1390.00" font-size="29" fill="#000" textLength="156.00" lengthAdjust="spacingAndGlyphs">Netherlands</text>
<text x="872.50" y="1390.00" font-size="29" fill="#000" textLength="33.26" lengthAdjust="spacingAndGlyphs">NL</text>
<text x="1104.50" y="1390.00" font-size="29" fill="#000" textLength="32.85" lengthAdjust="spacingAndGlyphs">no</text>
<text x="1328.69" y="1390" font-size="29" fill="#000" textLength="15.81" lengthAdjust="spacingAndGlyphs">1</text>
<text x="1572.69" y="1390" font-size="29" fill="#000" textLength="15.81" lengthAdjust="spacingAndGlyphs">0</text>
<text x="1606.40" y="1390.00" font-size="29" fill="#000" textLength="151.00" lengthAdjust="spacingAndGlyphs">04/01/1946</text>
<text x="1768.50" y="1390.00" font-size="29" fill="#000" textLength="104.36" lengthAdjust="spacingAndGlyphs">R/1/107</text>
<text x="2096.69" y="1390" font-size="29" fill="#000" textLength="15.81" lengthAdjust="spacingAndGlyphs">0</text>
<text x="2200.69" y="1390" font-size="29" fill="#000" textLength="15.81" lengthAdjust="spacingAndGlyphs">0</text>
<text x="2226.40" y="1390.00" font-size="29" fill="#000" textLength="449.60" lengthAdjust="spacingAndGlyphs">DECLARATION OF HUMAN RIGHTS</text>
<text x="242.69" y="1432" font-size="29" fill="#000" textLength="15.81" lengthAdjust="spacingAndGlyphs">6</text>
<text x="268.50" y="1432.00" font-size="29" fill="#000" textLength="102.82" lengthAdjust="spacingAndGlyphs">Belgium</text>
<text x="872.50" y="1432.00" font-size="29" fill="#000" textLength="32.21" lengthAdjust="spacingAndGlyphs">BE</text>
<text x="1104.50" y="1432.00" font-size="29" fill="#000" textLength="32.85" lengthAdjust="spacingAndGlyphs">no</text>
<text x="1328.69" y="1432" font-size="29" fill="#000" textLength="15.81" lengthAdjust="spacingAndGlyphs">1</text>
<text x="1572.69" y="1432" font-size="29" fill="#000" textLength="15.81" lengthAdjust="spacingAndGlyphs">0</text>
<text x="1606.40" y="1432.00" font-size="29" fill="#000" textLength="151.00" lengthAdjust="spacingAndGlyphs">04/01/1946</text>
<text x="1768.50" y="1432.00" font-size="29" fill="#000" textLength="104.36" lengthAdjust="spacingAndGlyphs">R/1/107</text>
<text x="2096.69" y="1432" font-size="29" fill="#000" textLength="15.81" lengthAdjust="spacingAndGlyphs">0</text>
<text x="2200.69" y="1432" font-size="29" fill="#000" textLength="15.81" lengthAdjust="spacingAndGlyphs">0</text>
<text x="2226.40" y="1432.00" font-size="29" fill="#000" textLength="449.60" lengthAdjust="spacingAndGlyphs">DECLARATION OF HUMAN RIGHTS</text>
<text x="242.69" y="1474" font-size="29" fill="#000" textLength="15.81" lengthAdjust="spacingAndGlyphs">6</text>
<text x="268.50" y="1474.00" font-size="29" fill="#000" textLength="158.27" lengthAdjust="spacingAndGlyphs">Luxembourg</text>
<text x="872.50" y="1474.00" font-size="29" fill="#000" textLength="33.13" lengthAdjust="spacingAndGlyphs">LU</text>
<text x="1104.50" y="1474.00" font-size="29" fill="#000" textLength="32.85" lengthAdjust="spacingAndGlyphs">no</text>
<text x="1328.69" y="1474" font-size="29" fill="#000" textLength="15.81" lengthAdjust="spacingAndGlyphs">1</text>
<text x="1572.69" y="1474" font-size="29" fill="#000" textLength="15.81" lengthAdjust="spacingAndGlyphs">0</text>
<text x="1606.40" y="1474.00" font-size="29" fill="#000" textLength="151.00" lengthAdjust="spacingAndGlyphs">04/01/1946</text>
<text x="1768.50" y="1474.00" font-size="29" fill="#000" textLength="104.36" lengthAdjust="spacingAndGlyphs">R/1/107</text>
<text x="2096.69" y="1474" font-size="29" fill="#000" textLength="15.81" lengthAdjust="spacingAndGlyphs">0</text>
<text x="2200.69" y="1474" font-size="29" fill="#000" textLength="15.81" lengthAdjust="spacingAndGlyphs">0</text>
<text x="2226.40" y="1474.00" font-size="29" fill="#000" textLength="449.60" lengthAdjust="spacingAndGlyphs">DECLARATION OF HUMAN RIGHTS</text>
<text x="242.69" y="1516" font-size="29" fill="#000" textLength="15.81" lengthAdjust="spacingAndGlyphs">6</text>
<text x="268.50" y="1516.00" font-size="29" fill="#000" textLength="85.27" lengthAdjust="spacingAndGlyphs">France</text>
<text x="872.50" y="1516.00" font-size="29" fill="#000" textLength="31.28" lengthAdjust="spacingAndGlyphs">FR</text>
<text x="1104.50" y="1516.00" font-size="29" fill="#000" textLength="32.85" lengthAdjust="spacingAndGlyphs">no</text>
<text x="1328.69" y="1516" font-size="29" fill="#000" textLength="15.81" lengthAdjust="spacingAndGlyphs">1</text>
<text x="1572.69" y="1516" font-size="29" fill="#000" textLength="15.81" lengthAdjust="spacingAndGlyphs">0</text>
<text x="1606.40" y="1516.00" font-size="29" fill="#000" textLength="151.00" lengthAdjust="spacingAndGlyphs">04/01/1946</text>
<text x="1768.50" y="1516.00" font-size="29" fill="#000" textLength="104.36" lengthAdjust="spacingAndGlyphs">R/1/107</text>
<text x="2096.69" y="1516" font-size="29" fill="#000" textLength="15.81" lengthAdjust="spacingAndGlyphs">0</text>
<text x="2200.69" y="1516" font-size="29" fill="#000" textLength="15.81" lengthAdjust="spacingAndGlyphs">0</text>
<text x="2226.40" y="1516.00" font-size="29" fill="#000" textLength="449.60" lengthAdjust="spacingAndGlyphs">DECLARATION OF HUMAN RIGHTS</text>
<text x="242.69" y="1558" font-size="29" fill="#000" textLength="15.81" lengthAdjust="spacingAndGlyphs">6</text>
<text x="268.50" y="1558.00" font-size="29" fill="#000" textLength="87.46" lengthAdjust="spacingAndGlyphs">Poland</text>
<text x="872.50" y="1558.00" font-size="29" fill="#000" textLength="29.23" lengthAdjust="spacingAndGlyphs">PL</text>
<text x="1104.50" y="1558.00" font-size="29" fill="#000" textLength="32.85" lengthAdjust="spacingAndGlyphs">no</text>
<text x="1328.69" y="1558" font-size="29" fill="#000" textLength="15.81" lengthAdjust="spacingAndGlyphs">1</text>
<text x="1572.69" y="1558" font-size="29" fill="#000" textLength="15.81" lengthAdjust="spacingAndGlyphs">0</text>
<text x="1606.40" y="1558.00" font-size="29" fill="#000" textLength="151.00" lengthAdjust="spacingAndGlyphs">04/01/1946</text>
<text x="1768.50" y="1558.00" font-size="29" fill="#000" textLength="104.36" lengthAdjust="spacingAndGlyphs">R/1/107</text>
<text x="2096.69" y="1558" font-size="29" fill="#000" textLength="15.81" lengthAdjust="spacingAndGlyphs">0</text>
<text x="2200.69" y="1558" font-size="29" fill="#000" textLength="15.81" lengthAdjust="spacingAndGlyphs">0</text>
<text x="2226.40" y="1558.00" font-size="29" fill="#000" textLength="449.60" lengthAdjust="spacingAndGlyphs">DECLARATION OF HUMAN RIGHTS</text>
<text x="242.69" y="1600" font-size="29" fill="#000" textLength="15.81" lengthAdjust="spacingAndGlyphs">6</text>
<text x="268.50" y="1600.00" font-size="29" fill="#000" textLength="191.66" lengthAdjust="spacingAndGlyphs">Czechoslovakia</text>
<text x="872.50" y="1600.00" font-size="29" fill="#000" textLength="30.97" lengthAdjust="spacingAndGlyphs">CS</text>
<text x="1104.50" y="1600.00" font-size="29" fill="#000" textLength="32.85" lengthAdjust="spacingAndGlyphs">no</text>
<text x="1328.69" y="1600" font-size="29" fill="#000" textLength="15.81" lengthAdjust="spacingAndGlyphs">1</text>
<text x="1572.69" y="1600" font-size="29" fill="#000" textLength="15.81" lengthAdjust="spacingAndGlyphs">0</text>
<text x="1606.40" y="1600.00" font-size="29" fill="#000" textLength="151.00" lengthAdjust="spacingAndGlyphs">04/01/1946</text>
<text x="1768.50" y="1600.00" font-size="29" fill="#000" textLength="104.36" lengthAdjust="spacingAndGlyphs">R/1/107</text>
<text x="2096.69" y="1600" font-size="29" fill="#000" textLength="15.81" lengthAdjust="spacingAndGlyphs">0</text>
<text x="2200.69" y="1600" font-size="29" fill="#000" textLength="15.81" lengthAdjust="spacingAndGlyphs">0</text>
<text x="2226.40" y="1600.00" font-size="29" fill="#000" textLength="449.60" lengthAdjust="spacingAndGlyphs">DECLARATION OF HUMAN RIGHTS</text>
<text x="242.69" y="1642" font-size="29" fill="#000" textLength="15.81" lengthAdjust="spacingAndGlyphs">6</text>
<text x="268.50" y="1642.00" font-size="29" fill="#000" textLength="133.24" lengthAdjust="spacingAndGlyphs">Yugoslavia</text>
<text x="872.50" y="1642.00" font-size="29" fill="#000" textLength="35.22" lengthAdjust="spacingAndGlyphs">YU</text>
<text x="1104.50" y="1642.00" font-size="29" fill="#000" textLength="32.85" lengthAdjust="spacingAndGlyphs">no</text>
<text x="1328.69" y="1642" font-size="29" fill="#000" textLength="15.81" lengthAdjust="spacingAndGlyphs">1</text>
<text x="1572.69" y="1642" font-size="29" fill="#000" textLength="15.81" lengthAdjust="spacingAndGlyphs">0</text>
<text x="1606.40" y="1642.00" font-size="29" fill="#000" textLength="151.00" lengthAdjust="spacingAndGlyphs">04/01/1946</text>
<text x="1768.50" y="1642.00" font-size="29" fill="#000" textLength="104.36" lengthAdjust="spacingAndGlyphs">R/1/107</text>
<text x="2096.69" y="1642" font-size="29" fill="#000" textLength="15.81" lengthAdjust="spacingAndGlyphs">0</text>
<text x="2200.69" y="1642" font-size="29" fill="#000" textLength="15.81" lengthAdjust="spacingAndGlyphs">0</text>
<text x="2226.40" y="1642.00" font-size="29" fill="#000" textLength="449.60" lengthAdjust="spacingAndGlyphs">DECLARATION OF HUMAN RIGHTS</text>
<text x="242.69" y="1684" font-size="29" fill="#000" textLength="15.81" lengthAdjust="spacingAndGlyphs">6</text>
<text x="268.50" y="1684.00" font-size="29" fill="#000" textLength="90.32" lengthAdjust="spacingAndGlyphs">Greece</text>
<text x="872.50" y="1684.00" font-size="29" fill="#000" textLength="36.62" lengthAdjust="spacingAndGlyphs">GR</text>
<text x="1104.50" y="1684.00" font-size="29" fill="#000" textLength="32.85" lengthAdjust="spacingAndGlyphs">no</text>
<text x="1328.69" y="1684" font-size="29" fill="#000" textLength="15.81" lengthAdjust="spacingAndGlyphs">1</text>
<text x="1572.69" y="1684" font-size="29" fill="#000" textLength="15.81" lengthAdjust="spacingAndGlyphs">0</text>
<text x="1606.40" y="1684.00" font-size="29" fill="#000" textLength="151.00" lengthAdjust="spacingAndGlyphs">04/01/1946</text>
<text x="1768.50" y="1684.00" font-size="29" fill="#000" textLength="104.36" lengthAdjust="spacingAndGlyphs">R/1/107</text>
<text x="2096.69" y="1684" font-size="29" fill="#000" textLength="15.81" lengthAdjust="spacingAndGlyphs">0</text>
<text x="2200.69" y="1684" font-size="29" fill="#000" textLength="15.81" lengthAdjust="spacingAndGlyphs">0</text>
<text x="2226.40" y="1684.00" font-size="29" fill="#000" textLength="449.60" lengthAdjust="spacingAndGlyphs">DECLARATION OF HUMAN RIGHTS</text>
<text x="242.69" y="1726" font-size="29" fill="#000" textLength="15.81" lengthAdjust="spacingAndGlyphs">6</text>
<text x="268.50" y="1726.00" font-size="29" fill="#000" textLength="245.26" lengthAdjust="spacingAndGlyphs">Russian Federation</text>
<text x="872.50" y="1726.00" font-size="29" fill="#000" textLength="36.96" lengthAdjust="spacingAndGlyphs">RU</text>
<text x="1104.50" y="1726.00" font-size="29" fill="#000" textLength="32.85" lengthAdjust="spacingAndGlyphs">no</text>
<text x="1328.69" y="1726" font-size="29" fill="#000" textLength="15.81" lengthAdjust="spacingAndGlyphs">1</text>
<text x="1572.69" y="1726" font-size="29" fill="#000" textLength="15.81" lengthAdjust="spacingAndGlyphs">0</text>
<text x="1606.40" y="1726.00" font-size="29" fill="#000" textLength="151.00" lengthAdjust="spacingAndGlyphs">04/01/1946</text>
<text x="1768.50" y="1726.00" font-size="29" fill="#000" textLength="104.36" lengthAdjust="spacingAndGlyphs">R/1/107</text>
<text x="2096.69" y="1726" font-size="29" fill="#000" textLength="15.81" lengthAdjust="spacingAndGlyphs">0</text>
<text x="2200.69" y="1726" font-size="29" fill="#000" textLength="15.81" lengthAdjust="spacingAndGlyphs">0</text>
<text x="2226.40" y="1726.00" font-size="29" fill="#000" textLength="449.60" lengthAdjust="spacingAndGlyphs">DECLARATION OF HUMAN RIGHTS</text>
<text x="242.69" y="1768" font-size="29" fill="#000" textLength="15.81" lengthAdjust="spacingAndGlyphs">6</text>
<text x="268.50" y="1768.00" font-size="29" fill="#000" textLength="99.10" lengthAdjust="spacingAndGlyphs">Ukraine</text>
<text x="872.50" y="1768.00" font-size="29" fill="#000" textLength="38.07" lengthAdjust="spacingAndGlyphs">UA</text>
<text x="1104.50" y="1768.00" font-size="29" fill="#000" textLength="32.85" lengthAdjust="spacingAndGlyphs">no</text>
<text x="1328.69" y="1768" font-size="29" fill="#000" textLength="15.81" lengthAdjust="spacingAndGlyphs">1</text>
<text x="1572.69" y="1768" font-size="29" fill="#000" textLength="15.81" lengthAdjust="spacingAndGlyphs">0</text>
<text x="1606.40" y="1768.00" font-size="29" fill="#000" textLength="151.00" lengthAdjust="spacingAndGlyphs">04/01/1946</text>
<text x="1768.50" y="1768.00" font-size="29" fill="#000" textLength="104.36" lengthAdjust="spacingAndGlyphs">R/1/107</text>
<text x="2096.69" y="1768" font-size="29" fill="#000" textLength="15.81" lengthAdjust="spacingAndGlyphs">0</text>
<text x="2200.69" y="1768" font-size="29" fill="#000" textLength="15.81" lengthAdjust="spacingAndGlyphs">0</text>
<text x="2226.40" y="1768.00" font-size="29" fill="#000" textLength="449.60" lengthAdjust="spacingAndGlyphs">DECLARATION OF HUMAN RIGHTS</text>
<text x="242.69" y="1810" font-size="29" fill="#000" textLength="15.81" lengthAdjust="spacingAndGlyphs">6</text>
<text x="268.50" y="1810.00" font-size="29" fill="#000" textLength="94.07" lengthAdjust="spacingAndGlyphs">Belarus</text>
<text x="872.50" y="1810.00" font-size="29" fill="#000" textLength="32.17" lengthAdjust="spacingAndGlyphs">BY</text>
<text x="1104.50" y="1810.00" font-size="29" fill="#000" textLength="32.85" lengthAdjust="spacingAndGlyphs">no</text>
<text x="1328.69" y="1810" font-size="29" fill="#000" textLength="15.81" lengthAdjust="spacingAndGlyphs">1</text>
<text x="1572.69" y="1810" font-size="29" fill="#000" textLength="15.81" lengthAdjust="spacingAndGlyphs">0</text>
<text x="1606.40" y="1810.00" font-size="29" fill="#000" textLength="151.00" lengthAdjust="spacingAndGlyphs">04/01/1946</text>
<text x="1768.50" y="1810.00" font-size="29" fill="#000" textLength="104.36" lengthAdjust="spacingAndGlyphs">R/1/107</text>
<text x="2096.69" y="1810" font-size="29" fill="#000" textLength="15.81" lengthAdjust="spacingAndGlyphs">0</text>
<text x="2200.69" y="1810" font-size="29" fill="#000" textLength="15.81" lengthAdjust="spacingAndGlyphs">0</text>
<text x="2226.40" y="1810.00" font-size="29" fill="#000" textLength="449.60" lengthAdjust="spacingAndGlyphs">DECLARATION OF HUMAN RIGHTS</text>
<text x="242.69" y="1852" font-size="29" fill="#000" textLength="15.81" lengthAdjust="spacingAndGlyphs">6</text>
<text x="268.50" y="1852.00" font-size="29" fill="#000" textLength="98.84" lengthAdjust="spacingAndGlyphs">Norway</text>
<text x="872.50" y="1852.00" font-size="29" fill="#000" textLength="40.80" lengthAdjust="spacingAndGlyphs">NO</text>
<text x="1104.50" y="1852.00" font-size="29" fill="#000" textLength="32.85" lengthAdjust="spacingAndGlyphs">no</text>
<text x="1328.69" y="1852" font-size="29" fill="#000" textLength="15.81" lengthAdjust="spacingAndGlyphs">1</text>
<text x="1572.69" y="1852" font-size="29" fill="#000" textLength="15.81" lengthAdjust="spacingAndGlyphs">0</text>
<text x="1606.40" y="1852.00" font-size="29" fill="#000" textLength="151.00" lengthAdjust="spacingAndGlyphs">04/01/1946</text>
<text x="1768.50" y="1852.00" font-size="29" fill="#000" textLength="104.36" lengthAdjust="spacingAndGlyphs">R/1/107</text>
<text x="2096.69" y="1852" font-size="29" fill="#000" textLength="15.81" lengthAdjust="spacingAndGlyphs">0</text>
<text x="2200.69" y="1852" font-size="29" fill="#000" textLength="15.81" lengthAdjust="spacingAndGlyphs">0</text>
<text x="2226.40" y="1852.00" font-size="29" fill="#000" textLength="449.60" lengthAdjust="spacingAndGlyphs">DECLARATION OF HUMAN RIGHTS</text>
<text x="242.69" y="1894" font-size="29" fill="#000" textLength="15.81" lengthAdjust="spacingAndGlyphs">6</text>
<text x="268.50" y="1894.00" font-size="29" fill="#000" textLength="116.04" lengthAdjust="spacingAndGlyphs">Denmark</text>
<text x="872.50" y="1894.00" font-size="29" fill="#000" textLength="35.40" lengthAdjust="spacingAndGlyphs">DK</text>
<text x="1104.50" y="1894.00" font-size="29" fill="#000" textLength="32.85" lengthAdjust="spacingAndGlyphs">no</text>
<text x="1328.69" y="1894" font-size="29" fill="#000" textLength="15.81" lengthAdjust="spacingAndGlyphs">1</text>
<text x="1572.69" y="1894" font-size="29" fill="#000" textLength="15.81" lengthAdjust="spacingAndGlyphs">0</text>
<text x="1606.40" y="1894.00" font-size="29" fill="#000" textLength="151.00" lengthAdjust="spacingAndGlyphs">04/01/1946</text>
<text x="1768.50" y="1894.00" font-size="29" fill="#000" textLength="104.36" lengthAdjust="spacingAndGlyphs">R/1/107</text>
<text x="2096.69" y="1894" font-size="29" fill="#000" textLength="15.81" lengthAdjust="spacingAndGlyphs">0</text>
<text x="2200.69" y="1894" font-size="29" fill="#000" textLength="15.81" lengthAdjust="spacingAndGlyphs">0</text>
<text x="2226.40" y="1894.00" font-size="29" fill="#000" textLength="449.60" lengthAdjust="spacingAndGlyphs">DECLARATION OF HUMAN RIGHTS</text>
<text x="132.11" y="466.00" font-size="29" fill="#1a1a1a" textLength="15.81" lengthAdjust="spacingAndGlyphs">1</text>
<text x="132.11" y="508.00" font-size="29" fill="#1a1a1a" textLength="15.81" lengthAdjust="spacingAndGlyphs">2</text>
<text x="132.11" y="550.00" font-size="29" fill="#1a1a1a" textLength="15.81" lengthAdjust="spacingAndGlyphs">3</text>
<text x="132.11" y="592.00" font-size="29" fill="#1a1a1a" textLength="15.81" lengthAdjust="spacingAndGlyphs">4</text>
<text x="132.11" y="634.00" font-size="29" fill="#1a1a1a" textLength="15.81" lengthAdjust="spacingAndGlyphs">5</text>
<text x="132.11" y="676.00" font-size="29" fill="#1a1a1a" textLength="15.81" lengthAdjust="spacingAndGlyphs">6</text>
<text x="132.11" y="718.00" font-size="29" fill="#1a1a1a" textLength="15.81" lengthAdjust="spacingAndGlyphs">7</text>
<text x="132.11" y="760.00" font-size="29" fill="#1a1a1a" textLength="15.81" lengthAdjust="spacingAndGlyphs">8</text>
<text x="132.11" y="802.00" font-size="29" fill="#1a1a1a" textLength="15.81" lengthAdjust="spacingAndGlyphs">9</text>
<text x="124.22" y="844.00" font-size="29" fill="#1a1a1a" textLength="31.63" lengthAdjust="spacingAndGlyphs">10</text>
<text x="124.16" y="886.00" font-size="29" fill="#1a1a1a" textLength="31.63" lengthAdjust="spacingAndGlyphs">11</text>
<text x="124.22" y="928.00" font-size="29" fill="#1a1a1a" textLength="31.63" lengthAdjust="spacingAndGlyphs">12</text>
<text x="124.22" y="970.00" font-size="29" fill="#1a1a1a" textLength="31.63" lengthAdjust="spacingAndGlyphs">13</text>
<text x="124.22" y="1012.00" font-size="29" fill="#1a1a1a" textLength="31.63" lengthAdjust="spacingAndGlyphs">14</text>
<text x="124.22" y="1054.00" font-size="29" fill="#1a1a1a" textLength="31.63" lengthAdjust="spacingAndGlyphs">15</text>
<text x="124.22" y="1096.00" font-size="29" fill="#1a1a1a" textLength="31.63" lengthAdjust="spacingAndGlyphs">16</text>
<rect x="112" y="1106" width="56" height="40" fill="#eeeeee"/>
<rect x="166" y="1104" width="4" height="44" fill="#217346"/>
<text x="124.22" y="1138.00" font-size="29" fill="#217346" textLength="31.63" lengthAdjust="spacingAndGlyphs" stroke="#217346">17</text>
<text x="124.22" y="1180.00" font-size="29" fill="#1a1a1a" textLength="31.63" lengthAdjust="spacingAndGlyphs">18</text>
<text x="124.22" y="1222.00" font-size="29" fill="#1a1a1a" textLength="31.63" lengthAdjust="spacingAndGlyphs">19</text>
<text x="124.22" y="1264.00" font-size="29" fill="#1a1a1a" textLength="31.63" lengthAdjust="spacingAndGlyphs">20</text>
<text x="124.22" y="1306.00" font-size="29" fill="#1a1a1a" textLength="31.63" lengthAdjust="spacingAndGlyphs">21</text>
<text x="124.22" y="1348.00" font-size="29" fill="#1a1a1a" textLength="31.63" lengthAdjust="spacingAndGlyphs">22</text>
<text x="124.22" y="1390.00" font-size="29" fill="#1a1a1a" textLength="31.63" lengthAdjust="spacingAndGlyphs">23</text>
<text x="124.22" y="1432.00" font-size="29" fill="#1a1a1a" textLength="31.63" lengthAdjust="spacingAndGlyphs">24</text>
<text x="124.22" y="1474.00" font-size="29" fill="#1a1a1a" textLength="31.63" lengthAdjust="spacingAndGlyphs">25</text>
<text x="124.22" y="1516.00" font-size="29" fill="#1a1a1a" textLength="31.63" lengthAdjust="spacingAndGlyphs">26</text>
<text x="124.22" y="1558.00" font-size="29" fill="#1a1a1a" textLength="31.63" lengthAdjust="spacingAndGlyphs">27</text>
<text x="124.22" y="1600.00" font-size="29" fill="#1a1a1a" textLength="31.63" lengthAdjust="spacingAndGlyphs">28</text>
<text x="124.22" y="1642.00" font-size="29" fill="#1a1a1a" textLength="31.63" lengthAdjust="spacingAndGlyphs">29</text>
<text x="124.22" y="1684.00" font-size="29" fill="#1a1a1a" textLength="31.63" lengthAdjust="spacingAndGlyphs">30</text>
<text x="124.22" y="1726.00" font-size="29" fill="#1a1a1a" textLength="31.63" lengthAdjust="spacingAndGlyphs">31</text>
<text x="124.22" y="1768.00" font-size="29" fill="#1a1a1a" textLength="31.63" lengthAdjust="spacingAndGlyphs">32</text>
<text x="124.22" y="1810.00" font-size="29" fill="#1a1a1a" textLength="31.63" lengthAdjust="spacingAndGlyphs">33</text>
<text x="124.22" y="1852.00" font-size="29" fill="#1a1a1a" textLength="31.63" lengthAdjust="spacingAndGlyphs">34</text>
<text x="124.22" y="1894.00" font-size="29" fill="#1a1a1a" textLength="31.63" lengthAdjust="spacingAndGlyphs">35</text>
</g>
<path d="M2688.1 1848.1 H2691.9 V1860 H2682.1 V1854 H2688.1 Z" fill="#4a5eb5"/>
<rect x="1348" y="1104" width="246" height="44" fill="none" stroke="#217346" stroke-width="4"/>
<rect x="1586" y="1141" width="12" height="12" fill="#ffffff"/>
<rect x="1588" y="1143" width="10" height="10" fill="#217346"/>
<rect x="2692" y="376" width="30" height="1552" fill="#f7f7f7"/>
<rect x="2692" y="383" width="1.2" height="1515" fill="#dedede"/>
<rect x="2692" y="383" width="30" height="1" fill="#dedede"/>
<rect x="2700" y="388" width="18" height="40" rx="9" fill="#b9b9b9"/>
<rect x="112" y="1898" width="2572.5" height="30" fill="#f8f8f8"/>
<rect x="112" y="1898" width="2572.5" height="1.5" fill="#e4e4e4"/>
<rect x="2684" y="1898" width="1.3" height="30" fill="#aeaeae"/>
<rect x="2685.3" y="1898" width="6.7" height="30" fill="#ffffff"/>
<rect x="2686.2" y="1904" width="3.6" height="18" fill="#dcdcdc"/>
<rect x="2698" y="378" width="18" height="3.6" fill="#dcdcdc"/>
<rect x="116" y="1906" width="1165" height="18" rx="9" fill="#b9b9b9"/>
<rect x="112" y="1928" width="2610" height="2" fill="#c9c9c9"/>
<rect x="112" y="1930" width="2610" height="50" fill="#efefef"/>
<rect x="112" y="1980" width="2610" height="2" fill="#a3a3a3"/>
<rect x="112" y="1982" width="2610" height="43.5" fill="url(#gStatus)"/>
<linearGradient id="gClip" x1="0" y1="0" x2="0" y2="1"><stop offset="0" stop-color="#e9be7c"/><stop offset="1" stop-color="#d69f55"/></linearGradient>
<rect x="142.3" y="196" width="43.4" height="49.6" rx="4" fill="url(#gClip)" stroke="#c08d4a" stroke-width="0.9"/>
<path d="M152 206 Q150 206 150 203.5 V200.5 Q150 197 153.5 197 H157 Q157.5 190 164 190 Q170.5 190 171 197 H174.5 Q178 197 178 200.5 V203.5 Q178 206 176 206 Z" fill="#6f6f6f"/>
<circle cx="164" cy="196" r="1.8" fill="#e2b676"/>
<path d="M157.3 211.6 H175.2 L188.8 224.4 V248.4 H157.3 Z" fill="#ffffff" stroke="#7a7a7a" stroke-width="1"/>
<path d="M175.2 211.6 V224.4 H188.8" fill="#eeeeee" stroke="#9a9a9a" stroke-width="0.9"/>
<path d="M208 218 H218 L213.00 225.2 Z" fill="#6b6b6b"/>
<text x="149.20" y="281.40" font-size="20.6" fill="#000" textLength="53.45" lengthAdjust="spacingAndGlyphs">Paste</text>
<path d="M250.3 184.6 Q249.4 190.5 253.5 194.5 L266.5 205 L268.4 202.6 L255.8 191.8 Q252.5 188.5 250.3 184.6 Z" fill="#1a1a1a" stroke="#1a1a1a" stroke-width="0.4"/>
<path d="M269.7 184.6 Q270.6 190.5 266.5 194.5 L253.5 205 L251.6 202.6 L264.2 191.8 Q267.5 188.5 269.7 184.6 Z" fill="#1a1a1a" stroke="#1a1a1a" stroke-width="0.4"/>
<circle cx="252" cy="209.8" r="4.9" fill="#f5f5f5" stroke="#1f74d0" stroke-width="2"/>
<circle cx="267.9" cy="209.8" r="4.9" fill="#f5f5f5" stroke="#1f74d0" stroke-width="2"/>
<path d="M247.3 239.6 H264.5 V260.5 H247.3 Z" fill="#fff" stroke="#7a7a7a" stroke-width="0.9"/>
<path d="M255.5 231.3 H264.2 L272.4 239 V252.4 H255.5 Z" fill="#fff" stroke="#7a7a7a" stroke-width="0.9"/>
<path d="M264.2 231.3 V239 H272.4" fill="#eee" stroke="#9a9a9a" stroke-width="0.8"/>
<path d="M290 242 H300 L295.00 249.4 Z" fill="#6b6b6b"/>
<g transform="translate(251.2 299.2) rotate(-45)">
<path d="M-1 -9.5 H6.5 V9.5 H1.5 Q-1 9.5 -1 7 Z" fill="#3f86dc" stroke="#2a6cc0" stroke-width="0.6"/>
<rect x="6.5" y="-9" width="5.5" height="18" fill="#b9aa92"/>
<rect x="12" y="-8.3" width="8" height="16.6" rx="1" fill="#ececec" stroke="#8a8a8a" stroke-width="0.8"/>
<rect x="19.5" y="-3.2" width="11.5" height="6.4" rx="3.2" fill="#efefef" stroke="#8a8a8a" stroke-width="0.8"/>
</g>
<rect x="323.85" y="184.5" width="1.5" height="123.5" fill="#dadada"/>
<rect x="343.1" y="193.1" width="208" height="46.3" rx="5" fill="#ffffff" stroke="#bcbcbc" stroke-width="1.3"/>
<rect x="522.5" y="198" width="1.2" height="36" fill="#dcdcdc"/>
<path d="M532 212 H542 L537.00 219.3 Z" fill="#6b6b6b"/>
<text x="352.80" y="223.80" font-size="25.6" fill="#000" textLength="151.96" lengthAdjust="spacingAndGlyphs">Calibri (Body)</text>
<rect x="561.1" y="193.1" width="103.6" height="46.3" rx="5" fill="#ffffff" stroke="#bcbcbc" stroke-width="1.3"/>
<rect x="636.5" y="198" width="1.2" height="36" fill="#dcdcdc"/>
<path d="M646 212 H656 L651.00 219.3 Z" fill="#6b6b6b"/>
<text x="569.70" y="223.80" font-size="25.6" fill="#000" textLength="25.15" lengthAdjust="spacingAndGlyphs">12</text>
<rect x="676.0" y="194.1" width="113.69999999999997" height="43.89999999999999" rx="5" fill="url(#gBtn)" stroke="#c2c2c2" stroke-width="1.3"/>
<rect x="732.3" y="194.5" width="1.3" height="43.099999999999994" fill="#d6d6d6"/>
<text x="685.70" y="225.80" font-size="30" fill="#333" textLength="21.11" lengthAdjust="spacingAndGlyphs" stroke="#333" stroke-width="0.9">A</text>
<path d="M710 218 L717 210 L724.1 218 Z" fill="#3a8ee6"/>
<text x="745.30" y="225.00" font-size="25" fill="#333" textLength="17.02" lengthAdjust="spacingAndGlyphs" stroke="#333" stroke-width="0.7">A</text>
<path d="M765 213 H779 L772 220.9 Z" fill="#3a8ee6"/>
<rect x="343.70000000000005" y="253.9" width="194.3" height="44.3" rx="5" fill="url(#gBtn)" stroke="#c2c2c2" stroke-width="1.3"/>
<rect x="400.09999999999997" y="254.3" width="1.3" height="43.5" fill="#d6d6d6"/>
<rect x="458.4" y="254.3" width="1.3" height="43.5" fill="#d6d6d6"/>
<rect x="514.1" y="258.3" width="1.3" height="35.5" fill="#d9d9d9"/>
<text x="363.60" y="286.10" font-size="28" font-weight="bold" fill="#333" textLength="16.75" lengthAdjust="spacingAndGlyphs">B</text>
<path d="M427 266 H438 L437.6 268 H434.8 L431.4 284 H434.4 L434 286.1 H422.3 L422.7 284 H425.6 L429 268 H426.6 Z" fill="#333"/>
<text x="479.80" y="284.60" font-size="25" fill="#333" textLength="16.55" lengthAdjust="spacingAndGlyphs" stroke="#333" stroke-width="0.8">U</text>
<rect x="477.8" y="288.2" width="20.2" height="1.7" fill="#222"/>
<path d="M522.3 272.2 H532 L527.15 279.5 Z" fill="#6b6b6b"/>
<rect x="549.8000000000001" y="253.9" width="75.99999999999993" height="44.3" rx="5" fill="url(#gBtn)" stroke="#c2c2c2" stroke-width="1.3"/>
<rect x="602.1" y="258.3" width="1.3" height="35.5" fill="#d9d9d9"/>
<g fill="#8c8c8c">
<rect x="560.70" y="258.6" width="1.3" height="1.3"/>
<rect x="560.70" y="273.8" width="1.3" height="1.3"/>
<rect x="565.47" y="258.6" width="1.3" height="1.3"/>
<rect x="565.47" y="273.8" width="1.3" height="1.3"/>
<rect x="570.24" y="258.6" width="1.3" height="1.3"/>
<rect x="570.24" y="273.8" width="1.3" height="1.3"/>
<rect x="575.01" y="258.6" width="1.3" height="1.3"/>
<rect x="575.01" y="273.8" width="1.3" height="1.3"/>
<rect x="579.79" y="258.6" width="1.3" height="1.3"/>
<rect x="579.79" y="273.8" width="1.3" height="1.3"/>
<rect x="584.56" y="258.6" width="1.3" height="1.3"/>
<rect x="584.56" y="273.8" width="1.3" height="1.3"/>
<rect x="589.33" y="258.6" width="1.3" height="1.3"/>
<rect x="589.33" y="273.8" width="1.3" height="1.3"/>
<rect x="594.10" y="258.6" width="1.3" height="1.3"/>
<rect x="594.10" y="273.8" width="1.3" height="1.3"/>
<rect x="560.70" y="263.03" width="1.3" height="1.3"/>
<rect x="577.40" y="263.03" width="1.3" height="1.3"/>
<rect x="594.10" y="263.03" width="1.3" height="1.3"/>
<rect x="560.70" y="267.46" width="1.3" height="1.3"/>
<rect x="577.40" y="267.46" width="1.3" height="1.3"/>
<rect x="594.10" y="267.46" width="1.3" height="1.3"/>
<rect x="560.70" y="271.89" width="1.3" height="1.3"/>
<rect x="577.40" y="271.89" width="1.3" height="1.3"/>
<rect x="594.10" y="271.89" width="1.3" height="1.3"/>
<rect x="560.70" y="276.31" width="1.3" height="1.3"/>
<rect x="577.40" y="276.31" width="1.3" height="1.3"/>
<rect x="594.10" y="276.31" width="1.3" height="1.3"/>
<rect x="560.70" y="280.74" width="1.3" height="1.3"/>
<rect x="577.40" y="280.74" width="1.3" height="1.3"/>
<rect x="594.10" y="280.74" width="1.3" height="1.3"/>
<rect x="560.70" y="285.17" width="1.3" height="1.3"/>
<rect x="577.40" y="285.17" width="1.3" height="1.3"/>
<rect x="594.10" y="285.17" width="1.3" height="1.3"/>
</g>
<rect x="561.3" y="291" width="33.4" height="2" fill="#222"/>
<path d="M610 272.2 H620 L615.00 279.5 Z" fill="#6b6b6b"/>
<rect x="638.0" y="253.9" width="151.7" height="44.3" rx="5" fill="url(#gBtn)" stroke="#c2c2c2" stroke-width="1.3"/>
<rect x="710.1" y="254.3" width="1.3" height="43.5" fill="#d6d6d6"/>
<rect x="686.4" y="258.3" width="1.3" height="35.5" fill="#d9d9d9"/>
<rect x="766.4" y="258.3" width="1.3" height="35.5" fill="#d9d9d9"/>
<path d="M648 271.2 L659.5 260 L668 273 L658 281.7 Z" fill="#fff" stroke="#333" stroke-width="1"/>
<path d="M654 265.8 L657 263 L665.5 271.8 L662.8 274.5 Z" fill="#4a90e2"/>
<path d="M661 268 V258.5 Q661 256.5 663 256.5 Q665 256.5 665 258.5 V262" fill="none" stroke="#222" stroke-width="1.2"/>
<path d="M664.5 265.5 Q671 266 671.3 272 Q671.5 276 669.5 278.5 Q668 277 668.2 273.5 Q668 269.5 664.5 268.5 Z" fill="#2b7ad6"/>
<rect x="642.3" y="284.2" width="35.4" height="9.5" rx="1.8" fill="#ffff00" stroke="#e3d600" stroke-width="0.7"/>
<path d="M694 272 H703.8 L698.90 279.3 Z" fill="#6b6b6b"/>
<text x="730.20" y="280.10" font-size="28" fill="#333" textLength="19.71" lengthAdjust="spacingAndGlyphs" stroke="#333" stroke-width="0.8">A</text>
<rect x="722.2" y="284.2" width="35.4" height="9.5" rx="1.8" fill="#ff0000"/>
<path d="M774 272 H784 L779.00 279.3 Z" fill="#6b6b6b"/>
<rect x="808.45" y="184.5" width="1.5" height="123.5" fill="#dadada"/>
<rect x="827.6" y="193.6" width="173.09999999999997" height="44.8" rx="5" fill="url(#gBtn)" stroke="#c2c2c2" stroke-width="1.3"/>
<rect x="884.1999999999999" y="194" width="1.3" height="44" fill="#d6d6d6"/>
<rect x="942.1999999999999" y="194" width="1.3" height="44" fill="#d6d6d6"/>
<linearGradient id="gSel" x1="0" y1="0" x2="0" y2="1"><stop offset="0" stop-color="#d4d4d4"/><stop offset="1" stop-color="#d9d9d9"/></linearGradient>
<path d="M942.8 193.6 H996 Q1000.7 193.6 1000.7 198.6 V233.4 Q1000.7 238.4 996 238.4 H942.8 Z" fill="url(#gSel)" stroke="#9a9a9a" stroke-width="1.2"/>
<rect x="844.1" y="203.85" width="23.9" height="1.7" fill="#222"/>
<rect x="844.1" y="210.15" width="23.9" height="1.7" fill="#222"/>
<rect x="902.2" y="211.95000000000002" width="23.9" height="1.7" fill="#222"/>
<rect x="902.2" y="218.15" width="23.9" height="1.7" fill="#222"/>
<rect x="960" y="219.95000000000002" width="23.9" height="1.7" fill="#222"/>
<rect x="960" y="226.25" width="23.9" height="1.7" fill="#222"/>
<rect x="1012.1" y="193.6" width="69.70000000000009" height="44.8" rx="5" fill="url(#gBtn)" stroke="#c2c2c2" stroke-width="1.3"/>
<g transform="translate(1038 218) rotate(-45)">
<text x="-13.20" y="1.60" font-size="25" fill="#333" textLength="28.06" lengthAdjust="spacingAndGlyphs">ab</text>
</g>
<path d="M1036.8 231.3 L1052 215.8" stroke="#2b7ad6" stroke-width="1.9"/>
<path d="M1055.9 211.9 L1055.9 219.2 L1048.7 212 Z" fill="#2b7ad6"/>
<path d="M1066 212 H1075.8 L1070.90 219.4 Z" fill="#6b6b6b"/>
<rect x="827.6" y="253.6" width="173.09999999999997" height="44.8" rx="5" fill="url(#gBtn)" stroke="#c2c2c2" stroke-width="1.3"/>
<rect x="884.1999999999999" y="254" width="1.3" height="44" fill="#d6d6d6"/>
<rect x="942.1999999999999" y="254" width="1.3" height="44" fill="#d6d6d6"/>
<rect x="842.2" y="266.04999999999995" width="25.799999999999955" height="1.7" fill="#222"/>
<rect x="842.2" y="272.15" width="17.59999999999991" height="1.7" fill="#222"/>
<rect x="842.2" y="278.15" width="29.699999999999932" height="1.7" fill="#222"/>
<rect x="842.2" y="284.25" width="21.699999999999932" height="1.7" fill="#222"/>
<rect x="902.2" y="266.04999999999995" width="23.799999999999955" height="1.7" fill="#222"/>
<rect x="906.3" y="272.15" width="15.700000000000045" height="1.7" fill="#222"/>
<rect x="900.1" y="278.15" width="27.799999999999955" height="1.7" fill="#222"/>
<rect x="904" y="284.25" width="20" height="1.7" fill="#222"/>
<rect x="960" y="266.04999999999995" width="26" height="1.7" fill="#222"/>
<rect x="968.4" y="272.15" width="17.600000000000023" height="1.7" fill="#222"/>
<rect x="956" y="278.15" width="30" height="1.7" fill="#222"/>
<rect x="964" y="284.25" width="22" height="1.7" fill="#222"/>
<rect x="1012.1" y="253.6" width="114.00000000000004" height="44.8" rx="5" fill="url(#gBtn)" stroke="#c2c2c2" stroke-width="1.3"/>
<rect x="1067.9" y="254" width="1.3" height="44" fill="#d6d6d6"/>
<path d="M1022.2 276.2 L1029.5 268.3 V272.3 H1038.1 V280 H1029.5 V284.1 Z" fill="#3a8ee6"/>
<rect x="1036.4" y="266.04999999999995" width="19.699999999999818" height="1.7" fill="#222"/>
<rect x="1042" y="272.15" width="14.099999999999909" height="1.7" fill="#222"/>
<rect x="1042" y="278.15" width="14.099999999999909" height="1.7" fill="#222"/>
<rect x="1036.4" y="284.25" width="19.699999999999818" height="1.7" fill="#222"/>
<path d="M1096.3 276.2 L1089 268.3 V272.3 H1080 V280 H1089 V284.1 Z" fill="#3a8ee6"/>
<rect x="1094" y="266.04999999999995" width="20" height="1.7" fill="#222"/>
<rect x="1100" y="272.15" width="14" height="1.7" fill="#222"/>
<rect x="1100" y="278.15" width="14" height="1.7" fill="#222"/>
<rect x="1094" y="284.25" width="20" height="1.7" fill="#222"/>
<rect x="1145.55" y="184.5" width="1.5" height="123.5" fill="#dadada"/>
<rect x="1173.8" y="205.9" width="18.5" height="22.4" rx="1" fill="#fbfbfb" stroke="#555" stroke-width="1"/>
<rect x="1174.3" y="216.3" width="17.5" height="0.8" fill="#c8c8c8"/>
<rect x="1176.4" y="210.1" width="23.4" height="1.5" fill="#333"/>
<rect x="1176.4" y="221.9" width="9.5" height="1.5" fill="#333"/>
<path d="M1204 208.4 Q1211.8 211 1211.6 218 Q1211 224.5 1202.5 225.6" fill="none" stroke="#2b7ad6" stroke-width="2.6"/>
<path d="M1196.8 224.8 L1203.9 219.5 V229.8 Z" fill="#2b7ad6"/>
<text x="1221.10" y="224.40" font-size="22.4" fill="#000" textLength="98.90" lengthAdjust="spacingAndGlyphs">Wrap Text</text>
<rect x="1175.5" y="259.8" width="31" height="30.7" fill="#fdfdfd" stroke="#cfcfcf" stroke-width="0.9"/>
<rect x="1175.8" y="266" width="30.4" height="0.8" fill="#dcdcdc"/>
<rect x="1175.8" y="283.6" width="30.4" height="0.8" fill="#dcdcdc"/>
<rect x="1191.2" y="260" width="0.8" height="6" fill="#dcdcdc"/>
<rect x="1191.2" y="283.8" width="0.8" height="6.6" fill="#dcdcdc"/>
<path d="M1180.4 274.9 L1184.5 270.8 V273.9 H1197.5 V270.8 L1201.6 274.9 L1197.5 279 V275.9 H1184.5 V279 Z" fill="#a9c8ee"/>
<text x="1221.10" y="284.40" font-size="22.4" fill="#8a8a8a" textLength="156.77" lengthAdjust="spacingAndGlyphs">Merge &amp; Center</text>
<path d="M1390.9 271.9 H1401 L1395.95 279.6 Z" fill="#b3b3b3"/>
<rect x="1426.05" y="184.5" width="1.5" height="123.5" fill="#dadada"/>
<rect x="1444.1" y="193.1" width="315.6" height="45.6" rx="5" fill="#ffffff" stroke="#bcbcbc" stroke-width="1.3"/>
<rect x="1731.4" y="197.5" width="1.2" height="37" fill="#dcdcdc"/>
<path d="M1740.5 212.2 H1751 L1745.75 219.5 Z" fill="#6b6b6b"/>
<text x="1453.90" y="223.80" font-size="25.6" fill="#000" textLength="85.35" lengthAdjust="spacingAndGlyphs">General</text>
<rect x="1444.8999999999999" y="253.9" width="188.2000000000001" height="44.10000000000001" rx="5" fill="url(#gBtn)" stroke="#c2c2c2" stroke-width="1.3"/>
<rect x="1517.5" y="254.3" width="1.3" height="43.30000000000001" fill="#d6d6d6"/>
<rect x="1575.4" y="254.3" width="1.3" height="43.30000000000001" fill="#d6d6d6"/>
<rect x="1493.1000000000001" y="258.3" width="1.3" height="35.30000000000001" fill="#d9d9d9"/>
<ellipse cx="1474" cy="279.9" rx="11" ry="4.6" fill="#a8732a"/>
<ellipse cx="1474" cy="277.7" rx="11" ry="4.6" fill="#f2c84f" stroke="#b07a2c" stroke-width="0.8"/>
<ellipse cx="1474" cy="274.3" rx="11" ry="4.6" fill="#a8732a"/>
<ellipse cx="1474" cy="272.1" rx="11" ry="4.6" fill="#f2c84f" stroke="#b07a2c" stroke-width="0.8"/>
<ellipse cx="1474" cy="268.7" rx="11" ry="4.6" fill="#a8732a"/>
<ellipse cx="1474" cy="266.5" rx="11" ry="4.6" fill="#f2c84f" stroke="#b07a2c" stroke-width="0.8"/>
<ellipse cx="1460" cy="286.6" rx="11" ry="4.6" fill="#a8732a"/>
<ellipse cx="1460" cy="284.4" rx="11" ry="4.6" fill="#f2c84f" stroke="#b07a2c" stroke-width="0.8"/>
<ellipse cx="1460" cy="281.0" rx="11" ry="4.6" fill="#a8732a"/>
<ellipse cx="1460" cy="278.8" rx="11" ry="4.6" fill="#f2c84f" stroke="#b07a2c" stroke-width="0.8"/>
<path d="M1501 272 H1511 L1506.00 279.7 Z" fill="#6b6b6b"/>
<text x="1535.10" y="288.20" font-size="30" fill="#333" textLength="24.08" lengthAdjust="spacingAndGlyphs">%</text>
<path d="M1598.8 266.5 Q1611.5 268 1611.2 277 Q1611 285 1600.5 287.5 Q1599 287 1600 285.5 Q1605 281.5 1604.8 277 Q1604.5 271.5 1599.5 268.8 Z" fill="#333"/>
<rect x="1644.3999999999999" y="253.9" width="114.50000000000004" height="44.10000000000001" rx="5" fill="url(#gBtn)" stroke="#c2c2c2" stroke-width="1.3"/>
<rect x="1701.4" y="254.3" width="1.3" height="43.30000000000001" fill="#d6d6d6"/>
<path d="M1657 268.9 L1664.5 261.9 V265.5 H1672.5 V272.3 H1664.5 V275.8 Z" fill="#3a8ee6"/>
<text x="1675.60" y="273.50" font-size="16.5" fill="#222" textLength="13.18" lengthAdjust="spacingAndGlyphs">.0</text>
<text x="1666.30" y="289.80" font-size="16.5" fill="#222" textLength="22.50" lengthAdjust="spacingAndGlyphs">.00</text>
<text x="1724.00" y="273.50" font-size="16.5" fill="#222" textLength="23.00" lengthAdjust="spacingAndGlyphs">.00</text>
<path d="M1730.8 285 L1723.3 278 V281.6 H1715.2 V288.4 H1723.3 V292 Z" fill="#3a8ee6"/>
<text x="1733.90" y="289.80" font-size="16.5" fill="#222" textLength="13.08" lengthAdjust="spacingAndGlyphs">.0</text>
<rect x="1778.05" y="184.5" width="1.5" height="123.5" fill="#dadada"/>
<rect x="1816.4" y="197.4" width="51.2" height="46.9" fill="#fff"/>
<rect x="1828.6" y="197.4" width="1" height="46.9" fill="#c9c9c9"/>
<rect x="1840.7" y="197.4" width="1" height="46.9" fill="#c9c9c9"/>
<rect x="1853.9" y="197.4" width="1" height="46.9" fill="#c9c9c9"/>
<rect x="1816.4" y="208.1" width="51.2" height="1" fill="#c9c9c9"/>
<rect x="1816.4" y="219.9" width="51.2" height="1" fill="#c9c9c9"/>
<rect x="1816.4" y="231.9" width="51.2" height="1" fill="#c9c9c9"/>
<rect x="1829.1" y="197.4" width="12.1" height="11.2" fill="#e88088"/>
<rect x="1829.1" y="208.6" width="20" height="11.8" fill="#5b9ee6"/>
<rect x="1829.1" y="220.4" width="25.3" height="12" fill="#e88088"/>
<rect x="1829.1" y="232.4" width="12.1" height="11.9" fill="#5b9ee6"/>
<rect x="1816.4" y="197.4" width="51.2" height="46.9" fill="none" stroke="#9a9a9a" stroke-width="1"/>
<rect x="1844.5" y="225.6" width="29" height="24.7" rx="1" fill="#fff" stroke="#8a8a8a" stroke-width="1"/>
<path d="M1853 235 H1865.5 M1853 240.5 H1865.5 M1862.5 230.5 L1855.5 245" stroke="#222" stroke-width="1.7"/>
<path d="M1882.8 218 H1892.8 L1887.80 225 Z" fill="#6b6b6b"/>
<text x="1798.00" y="281.60" font-size="20.8" fill="#000" textLength="111.47" lengthAdjust="spacingAndGlyphs">Conditional</text>
<text x="1800.00" y="305.30" font-size="20.8" fill="#000" textLength="107.19" lengthAdjust="spacingAndGlyphs">Formatting</text>
<rect x="1929.4" y="199.3" width="51.2" height="43.1" fill="#fff" stroke="#9a9a9a" stroke-width="1"/>
<rect x="1943" y="209.8" width="37.6" height="32.6" fill="#d4e4f7"/>
<rect x="1942.0" y="199.3" width="1" height="43.1" fill="#c3c3c3"/>
<rect x="1954.5" y="199.3" width="1" height="43.1" fill="#c3c3c3"/>
<rect x="1967.0" y="199.3" width="1" height="43.1" fill="#c3c3c3"/>
<rect x="1929.4" y="209.3" width="51.2" height="1" fill="#c3c3c3"/>
<rect x="1929.4" y="220.0" width="51.2" height="1" fill="#c3c3c3"/>
<rect x="1929.4" y="231.0" width="51.2" height="1" fill="#c3c3c3"/>
<g transform="translate(0 0)">
<path d="M1962.2 229.5 Q1975 215 1989 208.2 Q1993 207 1992 211 Q1986 222 1970 237.7 Z M1952 239 Q1953 231 1961 230 Q1970 231 1970 239 Q1969 245 1963.8 248 Q1956 253 1949 252 Q1944 251 1941.5 249.3 Q1948 246 1952 239 Z" fill="none" stroke="#ffffff" stroke-opacity="0.85" stroke-width="3.2"/>
<linearGradient id="gHdl" x1="0" y1="0" x2="1" y2="1"><stop offset="0" stop-color="#ffffff"/><stop offset="1" stop-color="#cfcfcf"/></linearGradient>
<path d="M1962.2 229.5 Q1975 215 1989 208.2 Q1993 207 1992 211 Q1986 222 1970 237.7 Z" fill="url(#gHdl)" stroke="#6f6f6f" stroke-width="0.9"/>
<path d="M1952 239 Q1953 231 1961 230 Q1970 231 1970 239 Q1969 245 1963.8 248 Q1958 244 1952 239 Z" fill="#e5ad62" stroke="#a8732f" stroke-width="0.8"/>
<path d="M1952 239 Q1958 244 1963.8 248 Q1956 253 1949 252 Q1944 251 1941.5 249.3 Q1948 246 1952 239 Z" fill="#3f8be0" stroke="#1f63c0" stroke-width="0.7"/>
</g>
<path d="M1998 218 H2008 L2003.00 225 Z" fill="#6b6b6b"/>
<text x="1932.50" y="281.60" font-size="20.8" fill="#000" textLength="69.55" lengthAdjust="spacingAndGlyphs">Format</text>
<text x="1927.00" y="305.30" font-size="20.8" fill="#000" textLength="81.04" lengthAdjust="spacingAndGlyphs">as Table</text>
<rect x="2031.4" y="199.3" width="51.3" height="43.1" fill="#fff" stroke="#9a9a9a" stroke-width="1"/>
<rect x="2040.3" y="208.3" width="33.5" height="25.7" fill="#d4e4f7"/>
<rect x="2039.8" y="199.3" width="1" height="43.1" fill="#c3c3c3"/>
<rect x="2073.8" y="199.3" width="1" height="43.1" fill="#c3c3c3"/>
<rect x="2031.4" y="207.8" width="51.3" height="1" fill="#c3c3c3"/>
<rect x="2031.4" y="233.8" width="51.3" height="1" fill="#c3c3c3"/>
<g transform="translate(102 0)">
<path d="M1962.2 229.5 Q1975 215 1989 208.2 Q1993 207 1992 211 Q1986 222 1970 237.7 Z M1952 239 Q1953 231 1961 230 Q1970 231 1970 239 Q1969 245 1963.8 248 Q1956 253 1949 252 Q1944 251 1941.5 249.3 Q1948 246 1952 239 Z" fill="none" stroke="#ffffff" stroke-opacity="0.85" stroke-width="3.2"/>
<linearGradient id="gHdl" x1="0" y1="0" x2="1" y2="1"><stop offset="0" stop-color="#ffffff"/><stop offset="1" stop-color="#cfcfcf"/></linearGradient>
<path d="M1962.2 229.5 Q1975 215 1989 208.2 Q1993 207 1992 211 Q1986 222 1970 237.7 Z" fill="url(#gHdl)" stroke="#6f6f6f" stroke-width="0.9"/>
<path d="M1952 239 Q1953 231 1961 230 Q1970 231 1970 239 Q1969 245 1963.8 248 Q1958 244 1952 239 Z" fill="#e5ad62" stroke="#a8732f" stroke-width="0.8"/>
<path d="M1952 239 Q1958 244 1963.8 248 Q1956 253 1949 252 Q1944 251 1941.5 249.3 Q1948 246 1952 239 Z" fill="#3f8be0" stroke="#1f63c0" stroke-width="0.7"/>
</g>
<path d="M2099.7 218 H2109.8 L2104.75 225 Z" fill="#6b6b6b"/>
<text x="2052.40" y="281.60" font-size="20.8" fill="#000" textLength="36.45" lengthAdjust="spacingAndGlyphs">Cell</text>
<text x="2040.70" y="305.30" font-size="20.8" fill="#000" textLength="59.76" lengthAdjust="spacingAndGlyphs">Styles</text>
<rect x="2134.25" y="184.5" width="1.5" height="123.5" fill="#dadada"/>
<rect x="2179.5" y="197.6" width="31" height="10.8" fill="#fff" stroke="#666" stroke-width="1"/>
<rect x="2194.6" y="197.6" width="0.8" height="10.8" fill="#bdbdbd"/>
<rect x="2179.5" y="223.7" width="31" height="22.6" fill="#fff" stroke="#666" stroke-width="1"/>
<rect x="2194.6" y="223.7" width="0.8" height="22.6" fill="#bdbdbd"/>
<rect x="2179.5" y="234.6" width="31" height="0.8" fill="#bdbdbd"/>
<rect x="2182.3" y="208.4" width="37.5" height="15.3" rx="2" fill="#5aa65a" stroke="#43894a" stroke-width="0.8"/>
<rect x="2200.2" y="208.4" width="0.8" height="15.3" fill="#3f7f45"/>
<path d="M2158.2 216 L2170 204 V210.5 H2177.9 V221.6 H2170 V228.1 Z" fill="#5aa65a" stroke="#43894a" stroke-width="0.8" stroke-linejoin="round"/>
<path d="M2232.4 218.3 H2241.7 L2237.05 225.2 Z" fill="#6b6b6b"/>
<text x="2170.50" y="282.00" font-size="20.8" fill="#000" textLength="56.82" lengthAdjust="spacingAndGlyphs">Insert</text>
<rect x="2273.8" y="197.6" width="30.8" height="10.8" fill="#fff" stroke="#666" stroke-width="1"/>
<rect x="2288.8" y="197.6" width="0.8" height="10.8" fill="#bdbdbd"/>
<rect x="2273.8" y="223.7" width="30.8" height="22.6" fill="#fff" stroke="#666" stroke-width="1"/>
<rect x="2288.8" y="223.7" width="0.8" height="22.6" fill="#bdbdbd"/>
<rect x="2273.8" y="234.6" width="30.8" height="0.8" fill="#bdbdbd"/>
<rect x="2264" y="208.4" width="38" height="15.3" rx="2" fill="#d95555" stroke="#b84444" stroke-width="0.8"/>
<rect x="2282" y="208.4" width="0.8" height="15.3" fill="#a83c3c"/>
<path d="M2310 210 L2322 221.7 M2322 210 L2310 221.7" stroke="#d04545" stroke-width="3.6" stroke-linecap="round"/>
<path d="M2336 218.3 H2346 L2341.00 225.2 Z" fill="#6b6b6b"/>
<text x="2270.00" y="282.00" font-size="20.8" fill="#000" textLength="64.02" lengthAdjust="spacingAndGlyphs">Delete</text>
<rect x="2368.3" y="194.5" width="3.5" height="11" rx="1.5" fill="#3a82d8"/><rect x="2412.5" y="194.5" width="3.5" height="11" rx="1.5" fill="#3a82d8"/>
<path d="M2375.9 199.6 L2381 194.3 V197.9 H2402.9 V194.3 L2408 199.6 L2402.9 204.9 V201.3 H2381 V204.9 Z" fill="#3a82d8"/>
<rect x="2369.5" y="209.3" width="55" height="39.2" fill="#fff" stroke="#666" stroke-width="1"/>
<rect x="2380.1" y="209.3" width="0.8" height="39.2" fill="#bdbdbd"/>
<rect x="2396.2" y="209.3" width="0.8" height="39.2" fill="#bdbdbd"/>
<rect x="2412.2999999999997" y="209.3" width="0.8" height="39.2" fill="#bdbdbd"/>
<rect x="2369.5" y="220.0" width="55" height="0.8" fill="#bdbdbd"/>
<rect x="2369.5" y="236.0" width="55" height="0.8" fill="#bdbdbd"/>
<rect x="2380.2" y="220" width="16.4" height="16.4" rx="2.5" fill="#4a8fd8" stroke="#3a78c0" stroke-width="0.8"/>
<path d="M2436.2 218.3 H2446 L2441.10 225.2 Z" fill="#6b6b6b"/>
<text x="2370.50" y="282.00" font-size="20.8" fill="#000" textLength="69.55" lengthAdjust="spacingAndGlyphs">Format</text>
<rect x="2470.25" y="184.5" width="1.5" height="123.5" fill="#dadada"/>
<path d="M2504.07 184.05 L2527.80 184.05 L2527.80 192.90 L2526.10 192.90 L2525.30 190.20 L2523.30 187.90 L2513.70 187.90 L2521.80 198.10 L2511.80 209.80 L2526.60 209.80 L2528.20 206.00 L2529.70 206.00 L2529.70 215.70 L2504.07 215.70 L2504.07 213.80 L2516.10 200.00 L2504.07 186.00 Z" fill="#777777" stroke="#5c5c5c" stroke-width="0.8" stroke-linejoin="miter"/>
<path d="M2546 195.9 H2555.8 L2550.90 203.2 Z" fill="#6b6b6b"/>
<rect x="2503.4" y="231.4" width="25" height="29" rx="1" fill="#fdfdfd" stroke="#777" stroke-width="0.9"/>
<rect x="2503.9" y="231.9" width="24" height="5.6" fill="#b3b3b3"/>
<path d="M2512.5 241.9 H2519.4 V248.5 H2523.8 L2516 256.7 L2508.2 248.5 H2512.5 Z" fill="#3a82d8"/>
<path d="M2540.3 241.9 H2550 L2545.15 249.3 Z" fill="#6b6b6b"/>
<path d="M2501 296.5 L2518.5 278 Q2521 276 2523.5 278 L2531.5 284.5 Q2532.5 286.5 2531 288.5 L2513.5 306.5 Q2511 308 2508.5 306 L2501 300 Q2499.5 298.5 2501 296.5 Z" fill="#b84a64"/>
<path d="M2501 296.5 L2518.5 278 Q2521 276 2523.5 278 L2531.5 284.5 L2513 303 Z" fill="#e48aa0"/>
<path d="M2501 296.5 L2506.5 290.8 L2514.5 297.5 L2509 303 Z" fill="#f0bcc8"/>
<path d="M2540.3 288 H2550 L2545.15 295.3 Z" fill="#6b6b6b"/>
<text x="2581.00" y="219.70" font-size="29" fill="#2e86e0" textLength="21.90" lengthAdjust="spacingAndGlyphs" stroke="#2e86e0" stroke-width="0.9">A</text>
<text x="2583.60" y="245.80" font-size="29" fill="#6b6b6b" textLength="17.22" lengthAdjust="spacingAndGlyphs" stroke="#6b6b6b" stroke-width="0.9">Z</text>
<linearGradient id="gFun" x1="0" y1="0" x2="1" y2="0"><stop offset="0" stop-color="#6a6a6a"/><stop offset="0.5" stop-color="#9a9a9a"/><stop offset="1" stop-color="#6a6a6a"/></linearGradient>
<path d="M2606.5 209.5 Q2606.5 204.3 2624 204.3 Q2641.7 204.3 2641.7 209.5 L2628 227 V240 Q2628 242.3 2624.2 242.3 Q2620.3 242.3 2620.3 240 V227 Z" fill="url(#gFun)"/>
<ellipse cx="2624.1" cy="209.6" rx="15" ry="4" fill="#dedede" stroke="#777" stroke-width="1"/>
<path d="M2648.2 217.8 H2658 L2653.10 225.2 Z" fill="#6b6b6b"/>
<text x="2586.80" y="282.00" font-size="20.8" fill="#000" textLength="61.98" lengthAdjust="spacingAndGlyphs">Sort &amp;</text>
<text x="2592.90" y="306.00" font-size="20.8" fill="#000" textLength="49.85" lengthAdjust="spacingAndGlyphs">Filter</text>
<rect x="281" y="318" width="2.2" height="52" fill="#d2d2d2"/>
<rect x="487.9" y="326.2" width="2190" height="37.4" fill="#fbfbfb"/>
<text x="132.80" y="355.70" font-size="24.5" fill="#000" textLength="39.26" lengthAdjust="spacingAndGlyphs">F17</text>
<path d="M258 338 L265 327.8 L272 338 Z" fill="#6b6b6b"/>
<path d="M258 350 H272 L265 360 Z" fill="#6b6b6b"/>
<path d="M313.5 335.5 L332 354.2 M332 335.5 L313.5 354.2" stroke="#c9c9c9" stroke-width="3.6" stroke-linecap="round"/>
<path d="M369.5 345 L377 353.5 L394 335.5" fill="none" stroke="#c9c9c9" stroke-width="3.6" stroke-linecap="round" stroke-linejoin="round"/>
<text x="425" y="353.5" style="font-family:&quot;Liberation Serif&quot;;font-style:italic" font-size="33" fill="#333" textLength="32" lengthAdjust="spacingAndGlyphs">fx</text>
<rect x="472.3" y="330" width="1.3" height="29.5" fill="#d8d8d8"/>
<text x="487.90" y="353.40" font-size="24" fill="#000" textLength="13.73" lengthAdjust="spacingAndGlyphs">0</text>
<path d="M2700 339 H2714 L2707 349.8 Z" fill="#6b6b6b"/>
<path d="M156 1945 V1964 L142.5 1954.5 Z" fill="#b3b3b3"/>
<path d="M187.7 1945 V1964 L202 1954.5 Z" fill="#b3b3b3"/>
<path d="M233.7 1929 V1966.5 Q233.7 1972.6 239.8 1972.6 H384.3 Q390.4 1972.6 390.4 1966.5 V1929 Z" fill="#ffffff" stroke="#cccccc" stroke-width="1"/>
<text x="267.00" y="1957.50" font-size="25" font-weight="bold" fill="#217346" textLength="89.98" lengthAdjust="spacingAndGlyphs">unvotes</text>
<rect x="420" y="1951.5" width="20.3" height="3.6" fill="#555"/>
<rect x="428.35" y="1942.6" width="3.6" height="20.4" fill="#555"/>
<rect x="466.3" y="1931" width="1.3" height="39" fill="#d2d2d2"/>
<text x="161.60" y="2013.70" font-size="25" fill="#5a5a5a" textLength="67.72" lengthAdjust="spacingAndGlyphs">Ready</text>
<rect x="2086" y="1982" width="73.6" height="43" fill="#a9a9a9"/>
<rect x="2110" y="1990" width="26" height="26" rx="2" fill="#ffffff"/>
<g fill="#a9a9a9">
<rect x="2112.2" y="1992.3" width="5.6" height="5.6"/>
<rect x="2112.2" y="2000.2" width="5.6" height="5.6"/>
<rect x="2112.2" y="2008.1" width="5.6" height="5.6"/>
<rect x="2120.2" y="1992.3" width="5.6" height="5.6"/>
<rect x="2120.2" y="2000.2" width="5.6" height="5.6"/>
<rect x="2120.2" y="2008.1" width="5.6" height="5.6"/>
<rect x="2128.3" y="1992.3" width="5.6" height="5.6"/>
<rect x="2128.3" y="2000.2" width="5.6" height="5.6"/>
<rect x="2128.3" y="2008.1" width="5.6" height="5.6"/>
</g>
<rect x="2182.4" y="1991.2" width="25.6" height="23.6" rx="1.2" fill="none" stroke="#6b6b6b" stroke-width="1.8"/>
<rect x="2188.2" y="1995.2" width="14" height="15.4" fill="none" stroke="#6b6b6b" stroke-width="1.7"/>
<rect x="2191.3" y="1998.25" width="7.8" height="1.5" fill="#6b6b6b"/>
<rect x="2191.3" y="2002.05" width="7.8" height="1.5" fill="#6b6b6b"/>
<rect x="2191.3" y="2005.95" width="7.8" height="1.5" fill="#6b6b6b"/>
<rect x="2253.4" y="1991.2" width="25.6" height="23.6" rx="1.2" fill="none" stroke="#6b6b6b" stroke-width="1.8"/>
<path d="M2253.4 2005 H2269.2 V1991.2 M2260.4 1991.2 V2005" fill="none" stroke="#6b6b6b" stroke-width="1.7"/>
<rect x="2318" y="2001.6" width="16" height="3" fill="#6b6b6b"/>
<rect x="2350.5" y="2000" width="195" height="7.7" rx="3.85" fill="#a3a3a3"/>
<circle cx="2456.6" cy="2003.6" r="11.2" fill="#fafafa" stroke="#bdbdbd" stroke-width="1"/>
<rect x="2561" y="2002.1" width="17" height="3" fill="#6b6b6b"/>
<rect x="2568" y="1995.1" width="3" height="17" fill="#6b6b6b"/>
<text x="2612.60" y="2013.40" font-size="25" fill="#5a5a5a" textLength="60.64" lengthAdjust="spacingAndGlyphs">130%</text>
<circle cx="150.2" cy="101.8" r="12.3" fill="#fe5f57" stroke="#1c5e39" stroke-opacity="0.9" stroke-width="1.5"/>
<circle cx="190" cy="101.8" r="12.3" fill="#febb2e" stroke="#1c5e39" stroke-opacity="0.9" stroke-width="1.5"/>
<circle cx="229.8" cy="101.8" r="12.3" fill="#28c840" stroke="#1c5e39" stroke-opacity="0.9" stroke-width="1.5"/>
<rect x="269" y="86" width="1.5" height="32" fill="#27704a"/>
<text x="292.60" y="109.70" font-size="22.5" fill="#62a07b" textLength="99.04" lengthAdjust="spacingAndGlyphs" stroke="#62a07b" stroke-width="1.0">AutoSave</text>
<rect x="404" y="88" width="80" height="27.5" rx="13.75" fill="#26673f" fill-opacity="0.75"/>
<circle cx="418" cy="101.7" r="12.2" fill="#8ab99b"/>
<text x="437.00" y="106.80" font-size="16.5" font-weight="bold" fill="#86b596" textLength="29.99" lengthAdjust="spacingAndGlyphs">OFF</text>
<rect x="512" y="88" width="32" height="28" rx="3" fill="#d3e4d8"/>
<rect x="514.6" y="90.5" width="4.4" height="23" fill="#2c7a50"/>
<rect x="516" y="92.8" width="1.8" height="2.2" fill="#d3e4d8"/>
<rect x="516" y="97.2" width="1.8" height="2.2" fill="#d3e4d8"/>
<rect x="516" y="101.6" width="1.8" height="2.2" fill="#d3e4d8"/>
<path d="M524 92.4 H533.7 L539.8 98.5 V111.9 H524 Z" fill="#2c7a50"/>
<path d="M526 94.4 H532.6 V99.8 H537.8 V109.9 H526 Z" fill="#d3e4d8"/>
<path d="M534.3 94.8 L537.4 98 H534.3 Z" fill="#d3e4d8"/>
<path d="M579 88 H601 Q604 88 604 91 V113 Q604 116 601 116 H580 L576 112 V91 Q576 88 579 88 Z" fill="#d3e4d8"/>
<rect x="580" y="90.2" width="20" height="11" fill="#2c7a50"/>
<rect x="584" y="106.3" width="12" height="9.7" fill="#2c7a50"/>
<rect x="586.5" y="108.8" width="4" height="7.2" fill="#d3e4d8"/>
<path d="M641 99 L648 92.5 Q655 86.5 661.5 92.5 Q667 99 660.5 106.5" fill="none" stroke="#d3e4d8" stroke-width="3.6" stroke-linecap="round"/>
<path d="M636 96 V113 H652.6 Z" fill="#d3e4d8"/>
<path d="M682 98.7 H692.3 L687.15 106.6 Z" fill="#d3e4d8"/>
<path d="M737 93 Q745 98 744 105 Q742 113 734 113.5 Q725 113 723.5 104.5 Q723 99 727 95" fill="none" stroke="#69a682" stroke-width="3.6"/>
<path d="M731.5 91.5 L746 90 L737.7 101 Z" fill="#69a682"/>
<rect x="788" y="93.9" width="16" height="2.1" fill="#d3e4d8"/>
<path d="M788 99.7 H804 L796 109 Z" fill="#d3e4d8"/>
<path d="M1231.7 87.7 H1248 L1254.3 94 V116.2 H1231.7 Z" fill="#ffffff" stroke="#1c4f33" stroke-width="0.8"/>
<path d="M1248 87.7 V94 H1254.3 Z" fill="#d9d9d9"/>
<rect x="1234" y="90" width="6.5" height="3" fill="#b0b0b0"/>
<rect x="1241" y="90" width="6.5" height="3" fill="#b0b0b0"/>
<rect x="1241" y="95.2" width="5" height="3" fill="#7fc28c"/>
<rect x="1247" y="95.2" width="5" height="3" fill="#7fc28c"/>
<rect x="1241" y="99.2" width="5" height="3" fill="#7fc28c"/>
<rect x="1247" y="99.2" width="5" height="3" fill="#7fc28c"/>
<rect x="1241" y="103.2" width="5" height="3" fill="#7fc28c"/>
<rect x="1247" y="103.2" width="5" height="3" fill="#7fc28c"/>
<rect x="1241" y="107.2" width="5" height="3" fill="#7fc28c"/>
<rect x="1247" y="107.2" width="5" height="3" fill="#7fc28c"/>
<rect x="1241" y="111.2" width="5" height="3" fill="#7fc28c"/>
<rect x="1247" y="111.2" width="5" height="3" fill="#7fc28c"/>
<path d="M1227 95.2 L1239.7 93.8 V111.8 L1227 110.4 Z" fill="#1d6f3f"/>
<text x="1229.80" y="107.20" font-size="14" font-weight="bold" fill="#ffffff" textLength="6.51" lengthAdjust="spacingAndGlyphs">x</text>
<text x="1264.90" y="112.90" font-size="28" fill="#eef4f0" textLength="93.03" lengthAdjust="spacingAndGlyphs">unvotes</text>
<text x="1366.00" y="112.90" font-size="28" fill="#9ec8ad" textLength="238.95" lengthAdjust="spacingAndGlyphs">— Saved to my Mac</text>
<rect x="2256" y="83" width="360" height="37.5" rx="6" fill="#256a43"/>
<circle cx="2276.5" cy="99.5" r="7.6" fill="none" stroke="#e6f0ea" stroke-width="2.3"/>
<path d="M2282 105 L2290 112.4" stroke="#e6f0ea" stroke-width="2.5" stroke-linecap="round"/>
<path d="M2294 100.5 L2298.5 104.5 L2303 100.5" fill="none" stroke="#e6f0ea" stroke-width="1.9"/>
<text x="2313.00" y="111.90" font-size="25" fill="#8ec09f" textLength="152.79" lengthAdjust="spacingAndGlyphs" stroke="#8ec09f" stroke-width="0.6">Search Sheet</text>
<circle cx="2664" cy="102" r="14.8" fill="none" stroke="#e3efe7" stroke-width="2.4"/>
<ellipse cx="2659" cy="97" rx="1.7" ry="2.8" fill="#e3efe7"/><ellipse cx="2669" cy="97" rx="1.7" ry="2.8" fill="#e3efe7"/>
<path d="M2656 104 Q2664 113 2672 104" fill="none" stroke="#e3efe7" stroke-width="2.2"/>
<path d="M2688 99 H2698 L2693 106 Z" fill="#e3efe7"/>
<path d="M134 176 V138 Q134 132 140 132 H246 Q252 132 252 138 V176 Z" fill="url(#gHome)"/>
<text x="157.50" y="161.80" font-size="26" fill="#217346" textLength="70.74" lengthAdjust="spacingAndGlyphs" stroke="#217346" stroke-width="0.9">Home</text>
<text x="282.30" y="161.80" font-size="26" fill="#dde9e1" textLength="71.33" lengthAdjust="spacingAndGlyphs" stroke="#dde9e1" stroke-width="0.9">Insert</text>
<text x="408.40" y="161.80" font-size="26" fill="#dde9e1" textLength="151.52" lengthAdjust="spacingAndGlyphs" stroke="#dde9e1" stroke-width="0.9">Page Layout</text>
<text x="614.70" y="161.80" font-size="26" fill="#dde9e1" textLength="112.74" lengthAdjust="spacingAndGlyphs" stroke="#dde9e1" stroke-width="0.9">Formulas</text>
<text x="782.30" y="161.80" font-size="26" fill="#dde9e1" textLength="56.13" lengthAdjust="spacingAndGlyphs" stroke="#dde9e1" stroke-width="0.9">Data</text>
<text x="892.90" y="161.80" font-size="26" fill="#dde9e1" textLength="85.77" lengthAdjust="spacingAndGlyphs" stroke="#dde9e1" stroke-width="0.9">Review</text>
<text x="1032.40" y="161.80" font-size="26" fill="#dde9e1" textLength="58.49" lengthAdjust="spacingAndGlyphs" stroke="#dde9e1" stroke-width="0.9">View</text>
<path d="M1122 174 V136 Q1122 126 1132 126 H1236 Q1246 126 1246 136 V174 Z" fill="#1d5a37"/>
<text x="1151.00" y="162.20" font-size="26" fill="#eef3ef" textLength="64.22" lengthAdjust="spacingAndGlyphs" stroke="#eef3ef" stroke-width="0.9">Table</text>
<path d="M2535 150 V162.5 H2561" fill="none" stroke="#dde9e1" stroke-width="2.6"/>
<path d="M2541 158 Q2542 147 2552 146 H2554 V152 L2562.5 144.5 L2554 137.5 V141.5 Q2541 142 2541 158 Z" fill="#dde9e1"/>
<text x="2574.80" y="161.00" font-size="26" fill="#dde9e1" textLength="70.16" lengthAdjust="spacingAndGlyphs" stroke="#dde9e1" stroke-width="0.9">Share</text>
<path d="M2669.5 156 L2678 147 L2686.5 156" fill="none" stroke="#dde9e1" stroke-width="3.4" stroke-linecap="round" stroke-linejoin="round"/>
</g>
</svg>
</body></html>
